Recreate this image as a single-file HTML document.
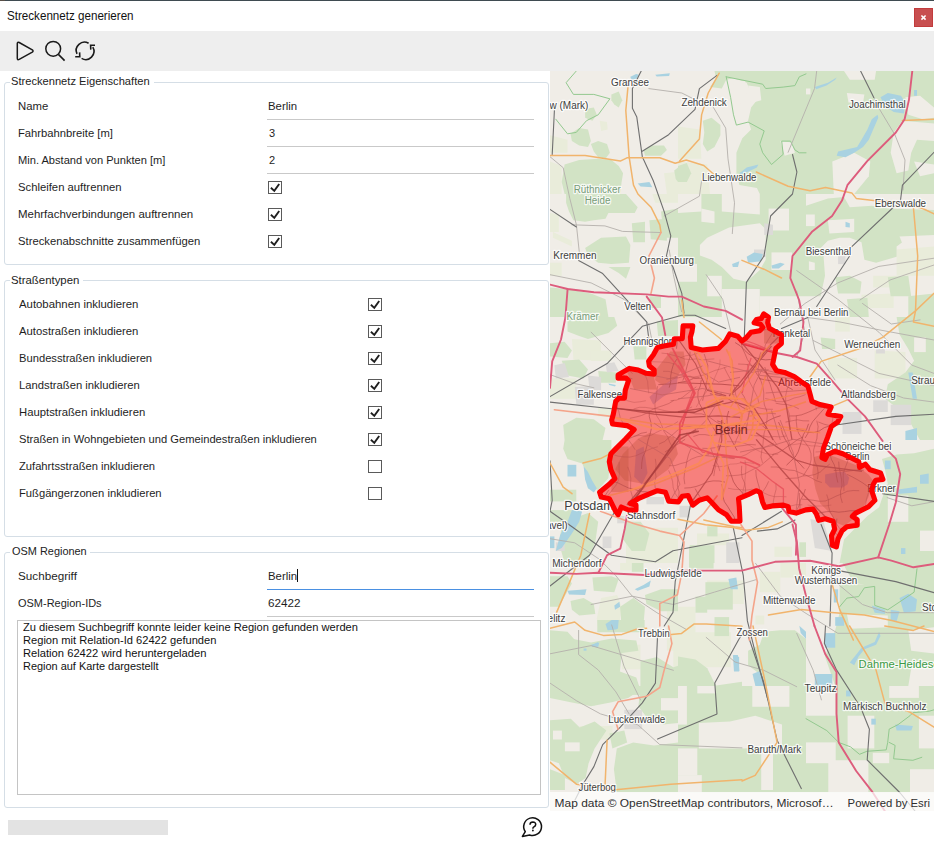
<!DOCTYPE html>
<html><head><meta charset="utf-8"><style>
html,body{margin:0;padding:0;background:#fff;}
body{width:934px;height:842px;position:relative;overflow:hidden;font-family:"Liberation Sans",sans-serif;}
.t{position:absolute;white-space:nowrap;}
.cb{position:absolute;width:12px;height:11px;border:1px solid #5a5a5a;background:#fff;}
.ck{position:absolute;}
.fs{position:absolute;left:4px;width:543px;border:1px solid #d5dee6;border-radius:3px;}
.lg{position:absolute;background:#fff;}
.ul{position:absolute;left:267px;width:267px;height:1px;background:#c9c9c9;}
</style></head>
<body>
<div style="position:absolute;left:0;top:0;width:934px;height:1px;background:#3f4b51"></div>
<div style="position:absolute;left:0;top:0;width:5px;height:1px;background:#5a5048"></div>
<div class="t" style="left:7.2px;top:8.74px;font-size:12.3px;line-height:14px;color:#111;transform:scaleX(0.9446);transform-origin:0 0;">Streckennetz generieren</div>
<div style="position:absolute;left:914px;top:8px;width:17px;height:17px;background:#c84f50;border:1px solid #c23c3d;"></div>
<svg style="position:absolute;left:914px;top:8px" width="19" height="19" viewBox="0 0 19 19"><path d="M7.4 7.5 L11.6 11.6 M11.6 7.5 L7.4 11.6" stroke="#fff" stroke-width="1.6"/></svg>
<div style="position:absolute;left:0;top:31px;width:934px;height:40px;background:#eeeeee"></div>
<svg style="position:absolute;left:0;top:31px" width="110" height="40" viewBox="0 31 110 40">
<path d="M17.3 43.6 Q17.3 41.6 19.2 42.5 L32.3 49.9 Q33.8 51 32.3 52.1 L19.2 59.3 Q17.3 60.3 17.3 58.3 Z" fill="none" stroke="#1a1a1a" stroke-width="1.5" stroke-linejoin="round"/>
<circle cx="53.2" cy="48.8" r="7.4" fill="none" stroke="#1a1a1a" stroke-width="1.5"/>
<path d="M58.4 54.4 L64.6 60.6" stroke="#1a1a1a" stroke-width="1.6"/>
<path d="M88.6 43.3 A8.2 8.2 0 0 0 77 53.8" fill="none" stroke="#1a1a1a" stroke-width="1.6"/>
<path d="M81.6 58.4 A8.2 8.2 0 0 0 92.8 47.2" fill="none" stroke="#1a1a1a" stroke-width="1.6"/>
<path d="M75.2 56.8 L79.8 56.8 L79.6 52.4" fill="none" stroke="#1a1a1a" stroke-width="1.6"/>
<path d="M95 45.3 L90.6 45.3 L90.8 49.6" fill="none" stroke="#1a1a1a" stroke-width="1.6"/>
</svg>
<div class="fs" style="top:82px;height:181px"></div>
<div class="lg" style="left:10px;top:80px;width:144px;height:4px"></div>
<div class="t" style="left:11.399999999999999px;top:74.69px;font-size:11px;line-height:13px;color:#222;transform:scaleX(1.0119);transform-origin:0 0;">Streckennetz Eigenschaften</div>
<div class="t" style="left:18.4px;top:99.69px;font-size:11px;line-height:13px;color:#1e1e1e;transform:scaleX(1.0292);transform-origin:0 0;">Name</div>
<div class="t" style="left:268.4px;top:99.69px;font-size:11px;line-height:13px;color:#1e1e1e;transform:scaleX(1.0347);transform-origin:0 0;">Berlin</div>
<div class="ul" style="top:119px"></div>
<div class="t" style="left:18.4px;top:126.69px;font-size:11px;line-height:13px;color:#1e1e1e;transform:scaleX(1.0211);transform-origin:0 0;">Fahrbahnbreite [m]</div>
<div class="t" style="left:269px;top:126.69px;font-size:11px;line-height:13px;color:#1e1e1e;">3</div>
<div class="ul" style="top:146px"></div>
<div class="t" style="left:18.4px;top:153.69px;font-size:11px;line-height:13px;color:#1e1e1e;transform:scaleX(1.0086);transform-origin:0 0;">Min. Abstand von Punkten [m]</div>
<div class="t" style="left:269px;top:153.69px;font-size:11px;line-height:13px;color:#1e1e1e;">2</div>
<div class="ul" style="top:173px"></div>
<div class="t" style="left:18.4px;top:180.69px;font-size:11px;line-height:13px;color:#1e1e1e;transform:scaleX(1.0257);transform-origin:0 0;">Schleifen auftrennen</div>
<div class="cb" style="left:268px;top:181px"></div><svg class="ck" style="left:268px;top:181px" width="14" height="13" viewBox="0 0 14 13"><path d="M2.9 6.8 L6.3 9.9 L11.2 3" fill="none" stroke="#1f1f1f" stroke-width="1.9"/></svg>
<div class="t" style="left:18.4px;top:207.69px;font-size:11px;line-height:13px;color:#1e1e1e;transform:scaleX(1.0417);transform-origin:0 0;">Mehrfachverbindungen auftrennen</div>
<div class="cb" style="left:268px;top:208px"></div><svg class="ck" style="left:268px;top:208px" width="14" height="13" viewBox="0 0 14 13"><path d="M2.9 6.8 L6.3 9.9 L11.2 3" fill="none" stroke="#1f1f1f" stroke-width="1.9"/></svg>
<div class="t" style="left:18.4px;top:234.69px;font-size:11px;line-height:13px;color:#1e1e1e;transform:scaleX(1.0245);transform-origin:0 0;">Streckenabschnitte zusammenfügen</div>
<div class="cb" style="left:268px;top:235px"></div><svg class="ck" style="left:268px;top:235px" width="14" height="13" viewBox="0 0 14 13"><path d="M2.9 6.8 L6.3 9.9 L11.2 3" fill="none" stroke="#1f1f1f" stroke-width="1.9"/></svg>
<div class="fs" style="top:280px;height:255px"></div>
<div class="lg" style="left:10px;top:278px;width:73px;height:4px"></div>
<div class="t" style="left:11.2px;top:273.69px;font-size:11px;line-height:13px;color:#222;transform:scaleX(1.0342);transform-origin:0 0;">Straßentypen</div>
<div class="t" style="left:18.5px;top:297.69px;font-size:11px;line-height:13px;color:#1e1e1e;transform:scaleX(1.0329);transform-origin:0 0;">Autobahnen inkludieren</div>
<div class="cb" style="left:368px;top:298px"></div><svg class="ck" style="left:368px;top:298px" width="14" height="13" viewBox="0 0 14 13"><path d="M2.9 6.8 L6.3 9.9 L11.2 3" fill="none" stroke="#1f1f1f" stroke-width="1.9"/></svg>
<div class="t" style="left:18.5px;top:324.69px;font-size:11px;line-height:13px;color:#1e1e1e;transform:scaleX(1.0277);transform-origin:0 0;">Autostraßen inkludieren</div>
<div class="cb" style="left:368px;top:325px"></div><svg class="ck" style="left:368px;top:325px" width="14" height="13" viewBox="0 0 14 13"><path d="M2.9 6.8 L6.3 9.9 L11.2 3" fill="none" stroke="#1f1f1f" stroke-width="1.9"/></svg>
<div class="t" style="left:18.5px;top:351.69px;font-size:11px;line-height:13px;color:#1e1e1e;transform:scaleX(1.0171);transform-origin:0 0;">Bundesstraßen inkludieren</div>
<div class="cb" style="left:368px;top:352px"></div><svg class="ck" style="left:368px;top:352px" width="14" height="13" viewBox="0 0 14 13"><path d="M2.9 6.8 L6.3 9.9 L11.2 3" fill="none" stroke="#1f1f1f" stroke-width="1.9"/></svg>
<div class="t" style="left:18.5px;top:378.69px;font-size:11px;line-height:13px;color:#1e1e1e;transform:scaleX(1.0227);transform-origin:0 0;">Landstraßen inkludieren</div>
<div class="cb" style="left:368px;top:379px"></div><svg class="ck" style="left:368px;top:379px" width="14" height="13" viewBox="0 0 14 13"><path d="M2.9 6.8 L6.3 9.9 L11.2 3" fill="none" stroke="#1f1f1f" stroke-width="1.9"/></svg>
<div class="t" style="left:18.5px;top:405.69px;font-size:11px;line-height:13px;color:#1e1e1e;transform:scaleX(1.0268);transform-origin:0 0;">Hauptstraßen inkludieren</div>
<div class="cb" style="left:368px;top:406px"></div><svg class="ck" style="left:368px;top:406px" width="14" height="13" viewBox="0 0 14 13"><path d="M2.9 6.8 L6.3 9.9 L11.2 3" fill="none" stroke="#1f1f1f" stroke-width="1.9"/></svg>
<div class="t" style="left:18.5px;top:432.69px;font-size:11px;line-height:13px;color:#1e1e1e;transform:scaleX(1.0153);transform-origin:0 0;">Straßen in Wohngebieten und Gemeindestraßen inkludieren</div>
<div class="cb" style="left:368px;top:433px"></div><svg class="ck" style="left:368px;top:433px" width="14" height="13" viewBox="0 0 14 13"><path d="M2.9 6.8 L6.3 9.9 L11.2 3" fill="none" stroke="#1f1f1f" stroke-width="1.9"/></svg>
<div class="t" style="left:18.5px;top:459.69px;font-size:11px;line-height:13px;color:#1e1e1e;transform:scaleX(1.0164);transform-origin:0 0;">Zufahrtsstraßen inkludieren</div>
<div class="cb" style="left:368px;top:460px"></div>
<div class="t" style="left:18.5px;top:486.69px;font-size:11px;line-height:13px;color:#1e1e1e;transform:scaleX(1.0183);transform-origin:0 0;">Fußgängerzonen inkludieren</div>
<div class="cb" style="left:368px;top:487px"></div>
<div class="fs" style="top:552px;height:254px"></div>
<div class="lg" style="left:10px;top:550px;width:80px;height:4px"></div>
<div class="t" style="left:11.5px;top:544.69px;font-size:11px;line-height:13px;color:#222;transform:scaleX(0.9932);transform-origin:0 0;">OSM Regionen</div>
<div class="t" style="left:18.4px;top:569.89px;font-size:11px;line-height:13px;color:#1e1e1e;transform:scaleX(1.0623);transform-origin:0 0;">Suchbegriff</div>
<div class="t" style="left:268.4px;top:569.89px;font-size:11px;line-height:13px;color:#1e1e1e;transform:scaleX(1.0347);transform-origin:0 0;">Berlin</div>
<div style="position:absolute;left:297px;top:569px;width:1px;height:13px;background:#111"></div>
<div class="ul" style="top:589px;background:#4a90e2;height:1.3px"></div>
<div class="t" style="left:18.4px;top:596.89px;font-size:11px;line-height:13px;color:#1e1e1e;transform:scaleX(0.9983);transform-origin:0 0;">OSM-Region-IDs</div>
<div class="t" style="left:268.2px;top:596.89px;font-size:11px;line-height:13px;color:#1e1e1e;transform:scaleX(1.0625);transform-origin:0 0;">62422</div>
<div class="ul" style="top:616px"></div>
<div style="position:absolute;left:17px;top:620px;width:522px;height:173px;border:1px solid #c4c4c4;background:#fff"></div>
<div class="t" style="left:22.599999999999998px;top:620.89px;font-size:11px;line-height:13px;color:#111;transform:scaleX(1.0113);transform-origin:0 0;">Zu diesem Suchbegriff konnte leider keine Region gefunden werden</div>
<div class="t" style="left:22.599999999999998px;top:633.89px;font-size:11px;line-height:13px;color:#111;transform:scaleX(1.0104);transform-origin:0 0;">Region mit Relation-Id 62422 gefunden</div>
<div class="t" style="left:22.599999999999998px;top:646.89px;font-size:11px;line-height:13px;color:#111;transform:scaleX(1.0171);transform-origin:0 0;">Relation 62422 wird heruntergeladen</div>
<div class="t" style="left:22.599999999999998px;top:659.89px;font-size:11px;line-height:13px;color:#111;transform:scaleX(0.9937);transform-origin:0 0;">Region auf Karte dargestellt</div>
<div style="position:absolute;left:8px;top:820px;width:160px;height:15px;background:#e3e3e3"></div>
<svg style="position:absolute;left:510px;top:805px" width="40" height="37" viewBox="510 805 40 37">
<path d="M525.3 831.7 A8.9 8.9 0 1 1 529.6 835 L522.4 836.4 Z" fill="none" stroke="#111" stroke-width="1.5" stroke-linejoin="round"/>
<path d="M530 824.7 Q530.1 822.1 532.9 822.1 Q535.8 822.2 535.7 824.6 Q535.6 826.2 533.6 827.2 Q532.9 827.6 532.9 828.7" fill="none" stroke="#111" stroke-width="1.5"/>
<circle cx="532.9" cy="830.5" r="0.9" fill="#111"/>
</svg>

<svg style="position:absolute;left:550px;top:71px" width="384" height="740" viewBox="550 71 384 740">
<rect x="550" y="71" width="384" height="740" fill="#f0ede7"/>
<path d="M599.7 120.7 L607.0 122.1 L607.7 129.4 L601.1 130.9 Z" fill="#e9ecda"/>
<path d="M550.0 135.3 L567.5 139.7 L567.5 152.8 L550.0 152.8 Z" fill="#e9ecda"/>
<path d="M550.0 161.6 L561.7 166.0 L561.7 194.0 L550.0 194.0 Z" fill="#e9ecda"/>
<path d="M664.0 173.3 L678.0 171.8 L678.0 194.0 L666.9 194.0 Z" fill="#e9ecda"/>
<path d="M678.0 126.5 L699.9 129.4 L701.4 158.7 L678.0 158.7 Z" fill="#e9ecda"/>
<path d="M678.0 161.6 L707.2 164.5 L710.1 194.0 L678.0 194.0 Z" fill="#e9ecda"/>
<path d="M887.8 152.8 L905.4 149.9 L906.8 176.2 L890.7 176.2 Z" fill="#e9ecda"/>
<path d="M552.9 232.0 L571.9 240.8 L571.9 246.6 L552.9 237.8 Z" fill="#e9ecda"/>
<path d="M550.0 213.0 L558.8 214.5 L558.8 232.0 L550.0 232.0 Z" fill="#e9ecda"/>
<path d="M550.0 262.7 L561.7 262.7 L561.7 275.8 L550.0 275.8 Z" fill="#e9ecda"/>
<path d="M652.3 194.0 L678.0 194.0 L678.0 202.8 L655.2 202.8 Z" fill="#e9ecda"/>
<path d="M742.3 199.8 L759.8 199.8 L759.8 214.5 L742.3 214.5 Z" fill="#e9ecda"/>
<path d="M896.6 249.5 L934.0 246.6 L934.0 275.8 L896.6 275.8 Z" fill="#e9ecda"/>
<path d="M873.2 275.8 L896.6 275.8 L896.6 287.5 L873.2 287.5 Z" fill="#e9ecda"/>
<path d="M861.5 294.8 L893.7 293.4 L893.7 308.0 L861.5 308.0 Z" fill="#e9ecda"/>
<path d="M571.9 338.9 L601.1 340.4 L601.1 360.8 L573.4 359.4 Z" fill="#e9ecda"/>
<path d="M550.0 378.4 L576.3 378.4 L576.3 398.8 L550.0 398.8 Z" fill="#e9ecda"/>
<path d="M590.9 350.6 L611.4 350.6 L611.4 360.8 L590.9 360.8 Z" fill="#e9ecda"/>
<path d="M598.2 407.6 L611.4 407.6 L611.4 416.4 L598.2 416.4 Z" fill="#e9ecda"/>
<path d="M827.9 357.9 L857.1 357.9 L857.1 378.4 L827.9 378.4 Z" fill="#e9ecda"/>
<path d="M874.7 350.6 L905.4 352.1 L905.4 378.4 L874.7 378.4 Z" fill="#e9ecda"/>
<path d="M835.2 317.0 L849.8 317.0 L849.8 331.6 L835.2 331.6 Z" fill="#e9ecda"/>
<path d="M626.0 527.7 L678.0 527.7 L678.0 563.0 L626.0 563.0 Z" fill="#e9ecda"/>
<path d="M697.0 533.5 L729.1 533.5 L729.1 545.2 L697.0 545.2 Z" fill="#e9ecda"/>
<path d="M774.4 546.7 L792.0 546.7 L792.0 556.9 L774.4 556.9 Z" fill="#e9ecda"/>
<path d="M857.1 535.0 L870.3 535.0 L870.3 545.2 L857.1 545.2 Z" fill="#e9ecda"/>
<path d="M621.9 644.7 L640.4 644.7 L640.4 669.3 L621.9 669.3 Z" fill="#e9ecda"/>
<path d="M673.3 632.3 L730.9 632.3 L730.9 667.3 L673.3 667.3 Z" fill="#e9ecda"/>
<path d="M601.1 598.1 L617.2 595.1 L621.6 606.8 L618.7 630.2 L598.2 628.8 L596.8 618.5 Z" fill="#e9ecda"/>
<path d="M666.9 611.2 L678.0 611.2 L678.0 650.7 L666.9 650.7 Z" fill="#e9ecda"/>
<path d="M620.1 563.0 L631.8 563.0 L631.8 570.3 L620.1 570.3 Z" fill="#e9ecda"/>
<path d="M678.0 606.8 L695.5 606.8 L695.5 633.1 L678.0 633.1 Z" fill="#e9ecda"/>
<path d="M707.2 580.5 L743.8 580.5 L743.8 603.9 L707.2 603.9 Z" fill="#e9ecda"/>
<path d="M678.0 633.1 L718.9 633.1 L718.9 665.3 L678.0 665.3 Z" fill="#e9ecda"/>
<path d="M759.8 571.8 L780.3 571.8 L780.3 592.2 L759.8 592.2 Z" fill="#e9ecda"/>
<path d="M780.3 563.0 L806.0 563.0 L806.0 577.6 L780.3 577.6 Z" fill="#e9ecda"/>
<path d="M755.4 615.6 L764.2 615.6 L764.2 624.4 L755.4 624.4 Z" fill="#e9ecda"/>
<path d="M845.5 615.6 L860.1 615.6 L860.1 627.3 L845.5 627.3 Z" fill="#e9ecda"/>
<path d="M579.7 726.1 L612.4 726.1 L612.4 739.5 L579.7 739.5 Z" fill="#e9ecda"/>
<path d="M636.1 751.3 L678.0 751.3 L678.0 781.0 L636.1 781.0 Z" fill="#e9ecda"/>
<path d="M570.5 133.8 L579.2 128.0 L588.0 129.4 L590.9 141.1 L588.0 147.0 L579.2 145.5 L571.9 141.1 Z" fill="#d2e3c5"/>
<path d="M590.9 144.1 L598.2 141.1 L607.0 144.1 L609.9 152.8 L605.5 158.7 L598.2 157.2 L593.8 151.4 Z" fill="#d2e3c5"/>
<path d="M585.1 109.0 L593.8 107.5 L596.8 114.8 L592.4 120.7 L585.1 117.8 Z" fill="#d2e3c5"/>
<path d="M611.4 94.4 L618.7 91.5 L622.3 100.2 L618.7 107.5 L614.3 104.6 L611.4 100.2 Z" fill="#d2e3c5"/>
<path d="M564.6 164.5 L579.2 160.1 L598.2 158.7 L611.4 160.1 L618.7 166.0 L623.1 173.3 L621.6 182.0 L620.1 194.0 L564.6 194.0 L561.7 182.0 Z" fill="#d2e3c5"/>
<path d="M643.5 149.9 L652.3 145.5 L664.0 145.5 L666.9 149.9 L661.0 155.7 L645.0 155.7 Z" fill="#d2e3c5"/>
<path d="M674.2 170.4 L678.0 167.4 L678.0 182.0 L675.7 179.1 Z" fill="#d2e3c5"/>
<path d="M714.5 71.0 L806.0 71.0 L806.0 194.0 L759.8 194.0 L756.9 187.9 L739.4 185.0 L736.4 173.3 L736.4 152.8 L742.3 138.2 L751.1 129.4 L748.1 120.7 L751.1 107.5 L756.9 100.2 L751.1 92.9 L746.7 82.7 L733.5 78.3 L726.2 79.8 L721.8 88.5 L710.1 87.1 L716.0 78.3 Z" fill="#d2e3c5"/>
<path d="M702.8 120.7 L711.6 117.8 L720.4 125.1 L720.4 135.3 L714.5 147.0 L707.2 151.4 L702.8 144.1 L704.3 132.4 Z" fill="#d2e3c5"/>
<path d="M678.0 166.0 L686.8 163.1 L691.2 173.3 L686.8 182.0 L678.0 182.0 Z" fill="#d2e3c5"/>
<path d="M806.0 71.0 L934.0 71.0 L934.0 194.0 L806.0 194.0 Z" fill="#d2e3c5"/>
<path d="M566.1 194.0 L626.0 194.0 L637.7 207.2 L634.7 213.0 L608.4 213.0 L605.5 218.8 L593.8 220.3 L585.1 221.8 L573.4 220.3 L569.0 211.5 L566.1 202.8 Z" fill="#d2e3c5"/>
<path d="M585.1 248.1 L601.1 237.8 L626.0 236.4 L630.4 245.1 L628.9 262.7 L611.4 264.1 L598.2 262.7 L588.0 255.4 Z" fill="#d2e3c5"/>
<path d="M608.4 267.1 L630.4 267.1 L626.0 278.7 L618.7 272.9 Z" fill="#d2e3c5"/>
<path d="M631.8 223.2 L645.0 221.8 L645.0 242.2 L633.3 242.2 Z" fill="#d2e3c5"/>
<path d="M649.4 220.3 L666.9 218.8 L666.9 240.8 L650.8 239.3 Z" fill="#d2e3c5"/>
<path d="M661.0 211.5 L678.0 208.6 L678.0 237.8 L664.0 237.8 Z" fill="#d2e3c5"/>
<path d="M550.0 287.5 L567.5 289.0 L590.9 293.4 L605.5 299.2 L608.4 317.0 L550.0 317.0 Z" fill="#d2e3c5"/>
<path d="M649.4 296.3 L661.0 296.3 L661.0 308.0 L649.4 308.0 Z" fill="#d2e3c5"/>
<path d="M678.0 194.0 L806.0 194.0 L806.0 317.0 L678.0 317.0 Z" fill="#d2e3c5"/>
<path d="M806.0 205.7 L827.9 198.4 L844.0 196.9 L849.8 207.2 L871.8 205.7 L887.8 208.6 L934.0 210.1 L934.0 240.8 L908.3 237.8 L896.6 246.6 L896.6 256.8 L876.1 262.7 L864.4 259.8 L861.5 242.2 L849.8 237.8 L839.6 237.8 L827.9 240.8 L820.6 248.1 L806.0 248.1 Z" fill="#d2e3c5"/>
<path d="M806.0 252.4 L823.5 255.4 L825.0 275.8 L820.6 296.3 L806.0 296.3 Z" fill="#d2e3c5"/>
<path d="M835.2 277.3 L849.8 275.8 L861.5 281.7 L860.1 293.4 L838.1 293.4 Z" fill="#d2e3c5"/>
<path d="M887.8 277.3 L908.3 275.8 L911.2 296.3 L890.7 296.3 Z" fill="#d2e3c5"/>
<path d="M846.9 299.2 L867.4 297.7 L868.8 317.0 L849.8 317.0 Z" fill="#d2e3c5"/>
<path d="M908.3 296.3 L934.0 293.4 L934.0 317.0 L908.3 317.0 Z" fill="#d2e3c5"/>
<path d="M567.5 317.0 L614.3 317.0 L617.2 325.8 L608.4 333.1 L598.2 336.0 L588.0 338.9 L579.2 336.0 L567.5 331.6 Z" fill="#d2e3c5"/>
<path d="M550.0 343.3 L564.6 341.8 L571.9 350.6 L567.5 357.9 L550.0 356.5 Z" fill="#d2e3c5"/>
<path d="M561.7 360.8 L579.2 359.4 L588.0 369.6 L583.6 378.4 L567.5 375.4 Z" fill="#d2e3c5"/>
<path d="M633.3 346.2 L646.4 346.2 L646.4 359.4 L634.7 359.4 Z" fill="#d2e3c5"/>
<path d="M598.2 371.1 L617.2 372.5 L615.8 382.8 L599.7 382.8 Z" fill="#d2e3c5"/>
<path d="M656.7 321.4 L678.0 319.9 L678.0 336.0 L658.1 336.0 Z" fill="#d2e3c5"/>
<path d="M563.2 425.1 L576.3 417.8 L593.8 419.3 L605.5 428.0 L602.6 440.0 L564.6 440.0 Z" fill="#d2e3c5"/>
<path d="M896.6 317.0 L934.0 317.0 L934.0 440.0 L920.0 440.0 L908.3 419.3 L896.6 407.6 L884.9 398.8 L887.8 384.2 L905.4 372.5 L914.1 360.8 L908.3 349.1 L899.5 334.5 Z" fill="#d2e3c5"/>
<path d="M820.6 337.5 L835.2 338.9 L835.2 349.1 L822.1 349.1 Z" fill="#d2e3c5"/>
<path d="M564.6 440.0 L611.4 440.0 L611.4 451.7 L608.4 478.0 L598.2 489.7 L588.0 488.2 L585.1 469.2 L582.1 463.4 L567.5 459.0 L563.2 448.8 Z" fill="#d2e3c5"/>
<path d="M550.0 489.7 L576.3 489.7 L576.3 501.4 L550.0 501.4 Z" fill="#d2e3c5"/>
<path d="M550.0 510.1 L571.9 510.1 L571.9 521.8 L550.0 521.8 Z" fill="#d2e3c5"/>
<path d="M571.9 518.9 L588.0 513.1 L598.2 521.8 L595.3 542.3 L586.5 563.0 L564.6 563.0 L558.8 542.3 L561.7 527.7 Z" fill="#d2e3c5"/>
<path d="M626.0 521.8 L640.6 521.8 L649.4 533.5 L645.0 551.0 L631.8 551.0 L623.1 539.4 Z" fill="#d2e3c5"/>
<path d="M689.7 545.2 L714.5 545.2 L714.5 563.0 L689.7 563.0 Z" fill="#d2e3c5"/>
<path d="M707.2 526.2 L717.5 526.2 L717.5 536.4 L707.2 536.4 Z" fill="#d2e3c5"/>
<path d="M799.3 542.3 L806.0 542.3 L806.0 556.9 L799.3 556.9 Z" fill="#d2e3c5"/>
<path d="M882.0 459.0 L896.6 454.6 L914.1 453.2 L934.0 448.8 L934.0 563.0 L839.6 563.0 L844.0 539.4 L855.7 527.7 L867.4 516.0 L879.1 507.2 L882.0 498.4 L887.8 483.8 L884.9 469.2 Z" fill="#d2e3c5"/>
<path d="M550.0 576.2 L567.5 576.2 L571.9 583.5 L564.6 596.6 L558.8 606.8 L550.0 606.8 Z" fill="#d2e3c5"/>
<path d="M570.5 601.0 L583.6 598.1 L593.8 603.9 L595.3 614.1 L579.2 615.6 L571.9 609.8 Z" fill="#d2e3c5"/>
<path d="M592.4 577.6 L611.4 576.2 L618.7 579.1 L614.3 592.2 L593.8 590.8 Z" fill="#d2e3c5"/>
<path d="M620.1 606.8 L633.3 598.1 L645.0 606.8 L643.5 624.4 L631.8 631.7 L621.6 627.3 Z" fill="#d2e3c5"/>
<path d="M631.8 563.0 L643.5 563.0 L643.5 571.8 L631.8 571.8 Z" fill="#d2e3c5"/>
<path d="M645.0 595.1 L661.0 589.3 L678.0 589.3 L678.0 611.2 L661.0 611.2 L646.4 603.9 Z" fill="#d2e3c5"/>
<path d="M550.0 630.2 L567.5 631.7 L579.2 644.8 L579.2 658.0 L593.8 650.7 L608.4 647.7 L614.3 641.9 L618.7 642.6 L614.3 653.6 L611.4 658.0 L579.2 662.4 L550.0 662.4 Z" fill="#d2e3c5"/>
<path d="M550.0 642.6 L570.6 638.5 L591.1 642.6 L611.7 638.5 L636.3 640.6 L638.4 650.8 L621.9 652.9 L619.9 671.4 L636.3 677.6 L640.4 689.9 L628.1 698.1 L611.7 702.2 L591.1 706.3 L570.6 702.2 L550.0 698.1 Z" fill="#d2e3c5"/>
<path d="M640.4 661.1 L656.9 657.0 L673.3 667.3 L693.9 661.1 L706.2 673.4 L714.4 685.8 L742.0 681.7 L742.0 719.9 L648.7 719.9 L638.4 706.3 L640.4 687.8 Z" fill="#d2e3c5"/>
<path d="M597.3 620.0 L644.6 620.0 L644.6 632.3 L597.3 632.3 Z" fill="#d2e3c5"/>
<path d="M764.2 631.7 L780.3 630.2 L794.9 630.2 L806.0 639.0 L806.0 686.0 L765.7 686.0 L759.8 674.0 L748.1 665.3 L748.1 650.7 L759.8 644.8 Z" fill="#d2e3c5"/>
<path d="M678.0 656.5 L695.5 659.4 L707.2 668.2 L716.0 686.0 L678.0 686.0 Z" fill="#d2e3c5"/>
<path d="M695.5 596.6 L707.2 596.6 L707.2 612.7 L695.5 612.7 Z" fill="#d2e3c5"/>
<path d="M711.6 592.2 L727.7 592.2 L727.7 603.9 L711.6 603.9 Z" fill="#d2e3c5"/>
<path d="M714.5 617.1 L729.1 617.1 L729.1 636.1 L714.5 636.1 Z" fill="#d2e3c5"/>
<path d="M839.6 583.5 L874.7 584.9 L887.8 580.5 L901.0 571.8 L934.0 568.8 L934.0 627.3 L908.3 630.2 L911.2 650.7 L934.0 653.6 L934.0 665.3 L911.2 668.2 L908.3 686.0 L835.2 686.0 L825.0 656.5 L835.2 630.2 L839.6 612.7 Z" fill="#d2e3c5"/>
<path d="M558.9 686.0 L612.4 686.0 L612.4 694.9 L603.5 702.3 L594.6 705.3 L573.8 700.9 L561.9 694.9 Z" fill="#d2e3c5"/>
<path d="M630.2 686.0 L654.0 686.0 L654.0 694.9 L630.2 694.9 Z" fill="#d2e3c5"/>
<path d="M651.0 697.9 L678.0 694.9 L678.0 723.1 L662.9 724.6 L654.0 715.7 Z" fill="#d2e3c5"/>
<path d="M550.0 720.2 L570.8 718.7 L579.7 727.6 L594.6 721.6 L606.4 730.6 L594.6 748.4 L588.6 763.2 L585.6 778.1 L576.7 784.0 L564.9 778.1 L558.9 763.2 L550.0 760.3 Z" fill="#d2e3c5"/>
<path d="M616.8 748.4 L633.2 742.4 L654.0 745.4 L678.0 742.4 L678.0 792.2 L616.8 792.2 L613.9 769.2 Z" fill="#d2e3c5"/>
<path d="M609.4 733.5 L624.3 730.6 L627.2 742.4 L612.4 748.4 Z" fill="#d2e3c5"/>
<path d="M550.0 769.2 L564.9 775.1 L564.9 790.0 L550.0 790.0 Z" fill="#d2e3c5"/>
<path d="M678.0 686.0 L806.0 686.0 L806.0 792.2 L678.0 792.2 Z" fill="#d2e3c5"/>
<path d="M806.0 686.0 L934.0 686.0 L934.0 792.2 L806.0 792.2 Z" fill="#d2e3c5"/>
<path d="M842.5 563.0 L934.0 554.8 L934.0 590.5 L886.3 590.5 L853.4 582.2 Z" fill="#d2e3c5"/>
<path d="M689.0 546.6 L713.6 546.6 L713.6 568.5 L689.0 568.5 Z" fill="#d2e3c5"/>
<path d="M705.4 582.2 L732.8 582.2 L732.8 609.6 L705.4 609.6 Z" fill="#d2e3c5"/>
<path d="M733.5 79.8 L745.2 81.2 L746.7 100.2 L739.4 104.6 L735.0 100.2 Z" fill="#f0ede7"/>
<path d="M748.1 85.6 L759.8 87.1 L761.3 100.2 L751.1 103.1 Z" fill="#f0ede7"/>
<path d="M780.3 141.1 L792.0 142.6 L794.9 152.8 L784.7 155.7 Z" fill="#f0ede7"/>
<path d="M844.0 71.0 L876.1 71.0 L874.7 79.8 L849.8 79.8 Z" fill="#f0ede7"/>
<path d="M905.4 97.3 L920.0 95.8 L934.0 107.5 L934.0 117.8 L922.9 119.2 L908.3 114.8 Z" fill="#f0ede7"/>
<path d="M893.7 132.4 L902.4 120.7 L934.0 123.6 L934.0 141.1 L917.0 139.7 L911.2 152.8 L908.3 170.4 L896.6 173.3 L890.7 152.8 Z" fill="#f0ede7"/>
<path d="M914.1 161.6 L934.0 164.5 L934.0 173.3 L920.0 176.2 Z" fill="#f0ede7"/>
<path d="M832.3 161.6 L854.2 152.8 L870.3 161.6 L868.8 176.2 L854.2 194.0 L833.8 194.0 Z" fill="#f0ede7"/>
<path d="M806.0 88.5 L810.4 88.5 L810.4 94.4 L806.0 94.4 Z" fill="#f0ede7"/>
<path d="M846.9 92.9 L864.4 94.4 L863.0 103.1 L848.4 102.4 Z" fill="#f0ede7"/>
<path d="M678.0 194.0 L701.4 194.0 L701.4 211.5 L678.0 213.0 Z" fill="#f0ede7"/>
<path d="M701.4 208.6 L714.5 211.5 L714.5 223.2 L701.4 221.8 Z" fill="#f0ede7"/>
<path d="M721.8 194.0 L759.8 194.0 L759.8 214.5 L721.8 211.5 Z" fill="#f0ede7"/>
<path d="M699.9 245.1 L707.2 237.8 L729.1 227.6 L759.8 223.2 L765.7 229.1 L765.7 259.8 L759.8 270.0 L746.7 281.7 L733.5 278.7 L721.8 267.1 L711.6 259.8 L699.9 255.4 Z" fill="#f0ede7"/>
<path d="M678.0 262.7 L697.0 264.1 L697.0 281.7 L678.0 281.7 Z" fill="#f0ede7"/>
<path d="M707.2 275.8 L721.8 275.8 L721.8 296.3 L707.2 296.3 Z" fill="#f0ede7"/>
<path d="M721.8 289.0 L759.8 289.0 L759.8 317.0 L721.8 317.0 Z" fill="#f0ede7"/>
<path d="M768.6 208.6 L789.0 208.6 L789.0 230.5 L768.6 230.5 Z" fill="#f0ede7"/>
<path d="M771.5 252.4 L792.0 252.4 L792.0 270.0 L771.5 270.0 Z" fill="#f0ede7"/>
<path d="M759.8 296.3 L806.0 296.3 L806.0 317.0 L759.8 317.0 Z" fill="#f0ede7"/>
<path d="M827.9 220.3 L854.2 218.8 L854.2 232.0 L829.4 233.5 Z" fill="#f0ede7"/>
<path d="M806.0 214.5 L814.8 214.5 L814.8 226.1 L806.0 226.1 Z" fill="#f0ede7"/>
<path d="M899.5 236.4 L934.0 234.9 L934.0 242.2 L902.4 243.7 Z" fill="#f0ede7"/>
<path d="M808.9 261.2 L814.8 262.7 L814.8 270.0 L808.9 270.0 Z" fill="#f0ede7"/>
<path d="M914.1 337.5 L925.8 337.5 L925.8 352.1 L914.1 352.1 Z" fill="#f0ede7"/>
<path d="M887.8 495.5 L908.3 495.5 L908.3 521.8 L887.8 521.8 Z" fill="#f0ede7"/>
<path d="M920.0 530.6 L934.0 530.6 L934.0 551.0 L920.0 551.0 Z" fill="#f0ede7"/>
<path d="M661.0 698.1 L681.6 698.1 L681.6 710.4 L661.0 710.4 Z" fill="#f0ede7"/>
<path d="M846.9 614.1 L887.8 615.6 L887.8 627.3 L849.8 628.8 Z" fill="#f0ede7"/>
<path d="M553.0 730.6 L561.9 730.6 L561.9 739.5 L553.0 739.5 Z" fill="#f0ede7"/>
<path d="M564.9 742.4 L579.7 742.4 L579.7 751.3 L564.9 751.3 Z" fill="#f0ede7"/>
<path d="M678.0 686.0 L686.9 686.0 L686.9 724.6 L678.0 724.6 Z" fill="#f0ede7"/>
<path d="M697.3 686.0 L715.1 686.0 L715.1 693.4 L697.3 693.4 Z" fill="#f0ede7"/>
<path d="M752.3 686.0 L789.4 686.0 L789.4 706.8 L752.3 706.8 Z" fill="#f0ede7"/>
<path d="M698.8 723.1 L730.0 721.6 L755.2 715.7 L782.0 724.6 L782.0 745.4 L744.8 748.4 L698.8 748.4 Z" fill="#f0ede7"/>
<path d="M678.0 748.4 L697.3 748.4 L697.3 775.1 L678.0 775.1 Z" fill="#f0ede7"/>
<path d="M761.2 748.4 L773.0 748.4 L773.0 790.0 L761.2 790.0 Z" fill="#f0ede7"/>
<path d="M678.0 775.1 L701.8 775.1 L701.8 792.2 L678.0 792.2 Z" fill="#f0ede7"/>
<path d="M806.0 691.9 L835.7 691.9 L835.7 715.7 L806.0 715.7 Z" fill="#f0ede7"/>
<path d="M847.6 715.7 L874.3 715.7 L874.3 748.4 L847.6 748.4 Z" fill="#f0ede7"/>
<path d="M806.0 742.4 L835.7 742.4 L835.7 763.2 L806.0 763.2 Z" fill="#f0ede7"/>
<path d="M828.3 760.3 L868.4 760.3 L868.4 792.2 L828.3 792.2 Z" fill="#f0ede7"/>
<path d="M918.9 715.7 L934.0 715.7 L934.0 748.4 L918.9 748.4 Z" fill="#f0ede7"/>
<path d="M910.0 769.2 L934.0 769.2 L934.0 792.2 L910.0 792.2 Z" fill="#f0ede7"/>
<path d="M889.2 686.0 L918.9 686.0 L918.9 697.9 L889.2 697.9 Z" fill="#f0ede7"/>
<path d="M872.8 752.8 L889.2 752.8 L889.2 763.2 L872.8 763.2 Z" fill="#f0ede7"/>
<path d="M754.0 249.5 L765.7 249.5 L765.7 256.8 L754.0 256.8 Z" fill="#dcdad8"/>
<path d="M764.2 223.2 L773.0 224.7 L773.0 234.9 L764.2 234.9 Z" fill="#dcdad8"/>
<path d="M838.1 255.4 L845.5 255.4 L845.5 264.1 L838.1 264.1 Z" fill="#dcdad8"/>
<path d="M554.4 365.2 L564.6 363.0 L569.0 376.9 L555.8 378.4 Z" fill="#dcdad8"/>
<path d="M605.5 363.8 L614.3 362.3 L618.7 371.1 L607.0 372.5 Z" fill="#dcdad8"/>
<path d="M588.0 375.4 L601.1 376.9 L601.1 390.1 L589.5 390.1 Z" fill="#dcdad8"/>
<path d="M574.8 387.1 L593.8 385.7 L593.8 404.7 L576.3 404.7 Z" fill="#dcdad8"/>
<path d="M890.7 404.7 L911.2 404.7 L911.2 425.1 L890.7 425.1 Z" fill="#dcdad8"/>
<path d="M842.5 412.0 L861.5 412.0 L861.5 433.9 L842.5 433.9 Z" fill="#dcdad8"/>
<path d="M873.2 400.3 L887.8 400.3 L887.8 412.0 L873.2 412.0 Z" fill="#dcdad8"/>
<path d="M876.1 349.1 L884.9 349.1 L884.9 353.5 L876.1 353.5 Z" fill="#dcdad8"/>
<path d="M646.4 497.0 L664.0 497.0 L664.0 504.3 L646.4 504.3 Z" fill="#dcdad8"/>
<path d="M617.2 516.0 L624.5 516.0 L624.5 523.3 L617.2 523.3 Z" fill="#dcdad8"/>
<path d="M602.6 536.4 L611.4 536.4 L611.4 548.1 L602.6 548.1 Z" fill="#dcdad8"/>
<path d="M555.8 542.3 L564.6 542.3 L564.6 551.0 L555.8 551.0 Z" fill="#dcdad8"/>
<path d="M679.5 505.8 L689.7 505.8 L689.7 517.4 L679.5 517.4 Z" fill="#dcdad8"/>
<path d="M726.2 542.3 L739.4 542.3 L739.4 563.0 L726.2 563.0 Z" fill="#dcdad8"/>
<path d="M810.4 518.9 L823.5 521.8 L832.3 551.0 L814.8 548.1 Z" fill="#dcdad8"/>
<path d="M624.3 709.8 L642.1 709.8 L642.1 729.1 L624.3 729.1 Z" fill="#dcdad8"/>
<path d="M630.4 76.8 L636.2 73.9 L639.1 74.7 L636.2 79.0 L631.1 79.8 Z" fill="#a9d2e1"/>
<path d="M655.2 74.7 L669.8 73.2 L669.1 76.1 L656.7 76.6 Z" fill="#a9d2e1"/>
<path d="M637.7 183.5 L649.4 182.0 L652.3 187.2 L640.6 186.4 Z" fill="#a9d2e1"/>
<path d="M739.4 173.3 L746.7 167.4 L758.4 164.5 L756.9 167.4 L748.1 171.8 L740.8 174.7 Z" fill="#a9d2e1"/>
<path d="M880.5 97.3 L887.8 92.9 L901.0 95.8 L905.4 103.1 L903.9 113.4 L893.7 111.9 L884.9 106.1 Z" fill="#a9d2e1"/>
<path d="M877.6 114.8 L871.8 119.2 L867.4 129.4 L861.5 139.7 L857.1 147.0 L838.1 151.4 L836.7 155.7 L845.5 157.2 L854.2 152.8 L863.0 147.0 L868.8 139.7 L873.2 129.4 L878.3 117.8 Z" fill="#a9d2e1"/>
<path d="M814.8 87.1 L827.9 82.7 L836.7 77.6 L835.2 79.8 L826.5 85.6 L816.2 89.3 Z" fill="#a9d2e1"/>
<path d="M914.1 90.0 L917.0 90.0 L917.0 95.8 L914.1 95.8 Z" fill="#a9d2e1"/>
<path d="M746.7 256.8 L754.0 252.4 L762.7 253.9 L761.3 261.2 L748.1 262.7 Z" fill="#a9d2e1"/>
<path d="M771.5 265.6 L780.3 262.7 L784.7 264.1 L778.8 268.5 L772.2 268.5 Z" fill="#a9d2e1"/>
<path d="M732.1 264.1 L739.4 261.2 L737.9 267.1 L732.8 267.1 Z" fill="#a9d2e1"/>
<path d="M845.5 221.8 L849.8 223.2 L849.8 227.6 L845.5 226.9 Z" fill="#a9d2e1"/>
<path d="M608.4 383.5 L615.8 384.9 L615.0 386.4 L609.2 384.9 Z" fill="#a9d2e1"/>
<path d="M908.3 372.5 L912.7 372.5 L917.0 398.8 L912.7 398.8 Z" fill="#a9d2e1"/>
<path d="M905.4 431.0 L917.0 428.0 L917.0 440.0 L905.4 440.0 Z" fill="#a9d2e1"/>
<path d="M567.5 464.8 L576.3 464.8 L576.3 476.5 L567.5 476.5 Z" fill="#a9d2e1"/>
<path d="M583.6 466.3 L588.0 472.1 L592.4 480.9 L596.8 488.2 L593.8 492.6 L588.0 488.2 L585.1 479.5 Z" fill="#a9d2e1"/>
<path d="M571.9 510.1 L582.1 511.6 L579.2 521.8 L571.9 533.5 L561.7 548.1 L555.8 551.0 L560.2 535.0 L567.5 521.8 Z" fill="#a9d2e1"/>
<path d="M550.0 536.4 L554.4 536.4 L554.4 548.1 L550.0 548.1 Z" fill="#a9d2e1"/>
<path d="M884.9 460.5 L890.7 460.5 L890.7 469.2 L884.9 469.2 Z" fill="#a9d2e1"/>
<path d="M896.6 489.7 L917.0 486.8 L917.0 492.6 L896.6 494.1 Z" fill="#a9d2e1"/>
<path d="M920.0 475.1 L928.7 473.6 L928.7 483.8 L920.0 483.8 Z" fill="#a9d2e1"/>
<path d="M901.0 548.1 L905.4 548.1 L905.4 554.0 L901.0 554.0 Z" fill="#a9d2e1"/>
<path d="M605.5 624.1 L611.7 620.0 L617.8 620.0 L616.8 629.2 L607.6 630.3 Z" fill="#a9d2e1"/>
<path d="M591.1 644.7 L599.3 642.6 L598.3 646.7 L592.1 647.1 Z" fill="#a9d2e1"/>
<path d="M732.9 654.9 L739.1 657.0 L739.1 671.4 L734.0 671.4 Z" fill="#a9d2e1"/>
<path d="M567.5 590.8 L586.5 589.3 L585.1 595.1 L569.0 594.4 Z" fill="#a9d2e1"/>
<path d="M614.3 605.4 L619.4 601.7 L620.1 606.8 L615.0 609.8 Z" fill="#a9d2e1"/>
<path d="M607.0 625.8 L612.8 620.0 L618.7 620.0 L617.9 628.8 L608.4 630.2 Z" fill="#a9d2e1"/>
<path d="M634.7 589.3 L643.5 584.9 L650.8 580.5 L649.4 586.4 L637.7 590.8 Z" fill="#a9d2e1"/>
<path d="M592.4 644.8 L598.2 641.9 L596.8 647.7 Z" fill="#a9d2e1"/>
<path d="M583.6 648.5 L586.5 648.5 L586.5 650.7 L583.6 650.7 Z" fill="#a9d2e1"/>
<path d="M728.4 579.1 L736.4 577.6 L737.9 589.3 L730.6 589.3 Z" fill="#a9d2e1"/>
<path d="M733.5 655.1 L737.9 655.1 L739.4 671.1 L734.3 671.1 Z" fill="#a9d2e1"/>
<path d="M752.5 674.0 L759.8 671.1 L767.1 686.0 L755.4 686.0 Z" fill="#a9d2e1"/>
<path d="M799.3 625.8 L806.0 631.7 L806.0 639.0 L800.7 633.1 Z" fill="#a9d2e1"/>
<path d="M899.5 598.1 L908.3 593.7 L917.0 599.5 L915.6 611.2 L903.9 612.7 Z" fill="#a9d2e1"/>
<path d="M871.8 605.4 L884.9 609.8 L884.9 614.1 L874.7 612.7 Z" fill="#a9d2e1"/>
<path d="M890.7 609.8 L899.5 611.2 L896.6 621.4 L890.7 620.0 Z" fill="#a9d2e1"/>
<path d="M833.8 589.3 L838.1 589.3 L838.1 602.5 L833.8 602.5 Z" fill="#a9d2e1"/>
<path d="M835.2 617.1 L844.0 617.1 L844.0 625.8 L835.2 625.8 Z" fill="#a9d2e1"/>
<path d="M879.1 631.7 L874.7 641.9 L861.5 647.7 L857.1 653.6 L849.8 662.4 L854.2 665.3 L858.6 656.5 L864.4 649.2 L876.1 644.8 L880.5 636.1 Z" fill="#a9d2e1"/>
<path d="M825.0 633.1 L835.2 633.1 L835.2 647.7 L825.0 647.7 Z" fill="#a9d2e1"/>
<path d="M814.8 674.0 L832.3 674.0 L832.3 686.0 L814.8 686.0 Z" fill="#a9d2e1"/>
<path d="M895.1 724.6 L912.9 726.1 L911.4 730.6 L896.6 730.6 Z" fill="#a9d2e1"/>
<path d="M871.3 718.7 L875.8 718.7 L875.8 724.6 L871.3 724.6 Z" fill="#a9d2e1"/>
<path d="M846.1 690.5 L850.6 690.5 L850.6 696.4 L846.1 696.4 Z" fill="#a9d2e1"/>
<polyline points="726.2,76.8 730.6,97.3 733.5,114.8 736.4,125.1 748.1,122.1 764.2,130.9 759.8,144.1 762.7,152.8 771.5,164.5 783.2,154.3 781.7,141.1 790.5,141.1 794.9,149.9 799.3,152.8 806.0,152.8" fill="none" stroke="#93c98f" stroke-width="1.0" stroke-linejoin="round" stroke-linecap="round"/>
<polyline points="726.2,76.8 762.7,84.2 765.7,88.5 783.2,87.1 794.9,85.6 799.3,76.8 806.0,73.9" fill="none" stroke="#93c98f" stroke-width="1.0" stroke-linejoin="round" stroke-linecap="round"/>
<polyline points="806.0,718.7 826.8,730.6 838.7,742.4 850.6,746.9 859.5,754.3 866.9,751.3 886.2,749.9 887.7,742.4 889.2,729.1 898.1,724.6 910.0,715.7 912.9,712.7 929.3,711.2 934.0,709.8" fill="none" stroke="#93c98f" stroke-width="1.0" stroke-linejoin="round" stroke-linecap="round"/>
<polyline points="889.2,742.4 895.1,745.4 893.6,758.8 912.9,760.3 921.8,757.3" fill="none" stroke="#93c98f" stroke-width="1.0" stroke-linejoin="round" stroke-linecap="round"/>
<polyline points="839.6,606.8 846.9,598.1 858.6,596.6 864.4,587.8 874.7,586.4 874.7,605.4 887.8,609.8 901.0,601.0 914.1,592.2 917.0,568.8" fill="none" stroke="#93c98f" stroke-width="1.0" stroke-linejoin="round" stroke-linecap="round"/>
<polyline points="576.3,71.0 566.1,82.7 573.4,94.4 593.8,94.4 609.9,98.8 598.2,114.8 586.5,120.7 576.3,132.4 567.5,133.8 555.8,119.2" fill="none" stroke="#93c98f" stroke-width="1.0" stroke-linejoin="round" stroke-linecap="round"/>
<polyline points="550.0,156.7 563.2,167.7 569.8,198.4 576.4,224.8 579.7,256.0" fill="none" stroke="#b4b0ab" stroke-width="0.9" stroke-linejoin="round" stroke-linecap="round"/>
<polyline points="572.0,224.8 604.9,225.9 622.5,231.4 659.8,232.5" fill="none" stroke="#b4b0ab" stroke-width="0.9" stroke-linejoin="round" stroke-linecap="round"/>
<polyline points="712.6,106.1 725.7,128.1 728.0,158.9 734.5,202.8 732.3,233.6" fill="none" stroke="#b4b0ab" stroke-width="0.9" stroke-linejoin="round" stroke-linecap="round"/>
<polyline points="701.6,180.8 699.4,196.2 664.2,216.0" fill="none" stroke="#b4b0ab" stroke-width="0.9" stroke-linejoin="round" stroke-linecap="round"/>
<polyline points="648.9,88.6 681.8,93.0 695.0,99.6" fill="none" stroke="#b4b0ab" stroke-width="0.9" stroke-linejoin="round" stroke-linecap="round"/>
<polyline points="816.7,71.0 814.5,88.6 788.1,152.3" fill="none" stroke="#b4b0ab" stroke-width="0.9" stroke-linejoin="round" stroke-linecap="round"/>
<polyline points="873.8,97.4 880.0,110.0 895.0,135.0 905.0,160.0 903.0,190.0" fill="none" stroke="#b4b0ab" stroke-width="0.9" stroke-linejoin="round" stroke-linecap="round"/>
<polyline points="550.0,374.6 574.2,383.4 593.9,387.8" fill="none" stroke="#b4b0ab" stroke-width="0.9" stroke-linejoin="round" stroke-linecap="round"/>
<polyline points="807.9,317.5 840.0,322.0 880.0,330.0 934.0,340.0" fill="none" stroke="#b4b0ab" stroke-width="0.9" stroke-linejoin="round" stroke-linecap="round"/>
<polyline points="808.0,318.0 815.0,350.0 835.0,380.0" fill="none" stroke="#b4b0ab" stroke-width="0.9" stroke-linejoin="round" stroke-linecap="round"/>
<polyline points="860.0,300.0 890.0,280.0 934.0,265.0" fill="none" stroke="#b4b0ab" stroke-width="0.9" stroke-linejoin="round" stroke-linecap="round"/>
<polyline points="550.0,683.1 576.4,700.7 600.5,713.9 637.9,724.9 659.8,744.6 742.0,747.9" fill="none" stroke="#b4b0ab" stroke-width="0.9" stroke-linejoin="round" stroke-linecap="round"/>
<polyline points="578.6,630.4 578.6,654.6 598.3,670.0 615.9,691.9 629.1,713.9" fill="none" stroke="#b4b0ab" stroke-width="0.9" stroke-linejoin="round" stroke-linecap="round"/>
<polyline points="550.0,538.7 574.7,542.8 599.3,559.2 615.8,575.7 632.2,596.2 656.9,612.7 685.7,629.1" fill="none" stroke="#b4b0ab" stroke-width="0.9" stroke-linejoin="round" stroke-linecap="round"/>
<polyline points="755.6,563.4 780.3,596.2 804.9,612.7 837.8,633.3 878.9,633.3 934.0,633.3" fill="none" stroke="#b4b0ab" stroke-width="0.9" stroke-linejoin="round" stroke-linecap="round"/>
<polyline points="706.2,637.4 735.0,662.0 763.8,670.3 796.7,686.7" fill="none" stroke="#b4b0ab" stroke-width="0.9" stroke-linejoin="round" stroke-linecap="round"/>
<polyline points="591.1,604.5 632.2,596.2 673.4,604.5 714.5,592.1 755.6,579.8" fill="none" stroke="#b4b0ab" stroke-width="0.9" stroke-linejoin="round" stroke-linecap="round"/>
<polyline points="550.0,653.8 591.1,645.6 632.2,657.9 673.4,670.3" fill="none" stroke="#b4b0ab" stroke-width="0.9" stroke-linejoin="round" stroke-linecap="round"/>
<polyline points="837.8,583.9 862.5,604.5 887.2,612.7 934.0,612.7" fill="none" stroke="#b4b0ab" stroke-width="0.9" stroke-linejoin="round" stroke-linecap="round"/>
<polyline points="887.2,497.6 911.8,505.8 934.0,501.7" fill="none" stroke="#b4b0ab" stroke-width="0.9" stroke-linejoin="round" stroke-linecap="round"/>
<polyline points="796.7,633.3 813.2,670.3 821.4,699.9" fill="none" stroke="#b4b0ab" stroke-width="0.9" stroke-linejoin="round" stroke-linecap="round"/>
<polyline points="611.7,625.0 624.0,666.2 640.5,699.9" fill="none" stroke="#b4b0ab" stroke-width="0.9" stroke-linejoin="round" stroke-linecap="round"/>
<polyline points="550.0,274.7 591.1,282.9 624.0,299.3 648.7,324.0 652.8,344.6" fill="none" stroke="#b4b0ab" stroke-width="0.9" stroke-linejoin="round" stroke-linecap="round"/>
<polyline points="669.2,250.0 673.4,274.7 681.6,311.7" fill="none" stroke="#b4b0ab" stroke-width="0.9" stroke-linejoin="round" stroke-linecap="round"/>
<polyline points="780.3,324.0 804.9,303.5 837.8,282.9 878.9,266.4 934.0,258.2" fill="none" stroke="#b4b0ab" stroke-width="0.9" stroke-linejoin="round" stroke-linecap="round"/>
<polyline points="796.7,270.6 837.8,299.3 878.9,332.2 911.8,365.1 934.0,373.4" fill="none" stroke="#b4b0ab" stroke-width="0.9" stroke-linejoin="round" stroke-linecap="round"/>
<polyline points="813.2,340.5 846.1,356.9 878.9,373.4 934.0,385.7" fill="none" stroke="#b4b0ab" stroke-width="0.9" stroke-linejoin="round" stroke-linecap="round"/>
<polyline points="796.7,291.1 804.9,332.2 796.7,356.9" fill="none" stroke="#b4b0ab" stroke-width="0.9" stroke-linejoin="round" stroke-linecap="round"/>
<polyline points="837.8,365.1 870.7,385.7 903.6,398.0 934.0,402.1" fill="none" stroke="#b4b0ab" stroke-width="0.9" stroke-linejoin="round" stroke-linecap="round"/>
<polyline points="591.1,332.2 615.8,356.9 632.2,373.4" fill="none" stroke="#b4b0ab" stroke-width="0.9" stroke-linejoin="round" stroke-linecap="round"/>
<polyline points="706.2,274.7 722.7,299.3 730.9,332.2" fill="none" stroke="#b4b0ab" stroke-width="0.9" stroke-linejoin="round" stroke-linecap="round"/>
<polyline points="862.5,303.5 891.3,324.0 920.1,319.9" fill="none" stroke="#b4b0ab" stroke-width="0.9" stroke-linejoin="round" stroke-linecap="round"/>
<polyline points="641.2,71.0 632.4,88.6 632.4,108.3 636.8,117.1 642.3,156.7 653.3,180.8 664.2,211.6 670.8,235.8 666.4,256.0 673.0,267.0 681.8,293.3 684.0,313.1" fill="none" stroke="#6f6f6f" stroke-width="1.1" stroke-linejoin="round" stroke-linecap="round"/>
<polyline points="642.3,151.2 668.6,134.7 695.0,109.4 699.4,88.6 717.0,75.4" fill="none" stroke="#6f6f6f" stroke-width="1.1" stroke-linejoin="round" stroke-linecap="round"/>
<polyline points="554.4,110.5 552.2,154.5" fill="none" stroke="#6f6f6f" stroke-width="1.1" stroke-linejoin="round" stroke-linecap="round"/>
<polyline points="550.0,209.4 576.4,227.0" fill="none" stroke="#6f6f6f" stroke-width="1.1" stroke-linejoin="round" stroke-linecap="round"/>
<polyline points="860.6,71.0 873.8,97.4" fill="none" stroke="#6f6f6f" stroke-width="1.1" stroke-linejoin="round" stroke-linecap="round"/>
<polyline points="934.0,152.3 902.4,185.2 900.2,202.8" fill="none" stroke="#6f6f6f" stroke-width="1.1" stroke-linejoin="round" stroke-linecap="round"/>
<polyline points="895.8,205.0 851.8,246.7" fill="none" stroke="#6f6f6f" stroke-width="1.1" stroke-linejoin="round" stroke-linecap="round"/>
<polyline points="792.5,154.5 796.9,172.0 792.5,194.0 770.6,216.0 764.0,256.0" fill="none" stroke="#6f6f6f" stroke-width="1.1" stroke-linejoin="round" stroke-linecap="round"/>
<polyline points="578.6,260.4 602.7,273.6 646.7,321.9 648.9,339.5" fill="none" stroke="#6f6f6f" stroke-width="1.1" stroke-linejoin="round" stroke-linecap="round"/>
<polyline points="550.0,396.6 607.1,363.6 642.3,326.3 681.8,315.3 695.0,315.3 725.7,328.5" fill="none" stroke="#6f6f6f" stroke-width="1.1" stroke-linejoin="round" stroke-linecap="round"/>
<polyline points="550.0,402.1 611.5,408.7" fill="none" stroke="#6f6f6f" stroke-width="1.1" stroke-linejoin="round" stroke-linecap="round"/>
<polyline points="849.6,256.0 816.7,306.5" fill="none" stroke="#6f6f6f" stroke-width="1.1" stroke-linejoin="round" stroke-linecap="round"/>
<polyline points="781.5,328.5 807.9,317.5" fill="none" stroke="#6f6f6f" stroke-width="1.1" stroke-linejoin="round" stroke-linecap="round"/>
<polyline points="834.3,425.2 895.8,416.4 934.0,414.2" fill="none" stroke="#6f6f6f" stroke-width="1.1" stroke-linejoin="round" stroke-linecap="round"/>
<polyline points="764.0,256.0 746.4,282.4 744.2,339.5" fill="none" stroke="#6f6f6f" stroke-width="1.1" stroke-linejoin="round" stroke-linecap="round"/>
<polyline points="550.0,460.8 552.2,500.3 550.0,511.3" fill="none" stroke="#6f6f6f" stroke-width="1.1" stroke-linejoin="round" stroke-linecap="round"/>
<polyline points="550.0,511.3 572.0,526.7 611.5,555.2 655.4,561.8 673.0,550.8 742.0,537.7" fill="none" stroke="#6f6f6f" stroke-width="1.1" stroke-linejoin="round" stroke-linecap="round"/>
<polyline points="613.7,513.5 589.5,555.2 550.0,586.0" fill="none" stroke="#6f6f6f" stroke-width="1.1" stroke-linejoin="round" stroke-linecap="round"/>
<polyline points="690.6,504.7 675.2,581.6 673.0,612.4 664.2,626.0" fill="none" stroke="#6f6f6f" stroke-width="1.1" stroke-linejoin="round" stroke-linecap="round"/>
<polyline points="742.0,535.5 781.5,511.3" fill="none" stroke="#6f6f6f" stroke-width="1.1" stroke-linejoin="round" stroke-linecap="round"/>
<polyline points="757.4,531.1 777.1,528.9 795.0,520.0" fill="none" stroke="#6f6f6f" stroke-width="1.1" stroke-linejoin="round" stroke-linecap="round"/>
<polyline points="821.1,524.5 832.1,553.0 829.9,626.0" fill="none" stroke="#6f6f6f" stroke-width="1.1" stroke-linejoin="round" stroke-linecap="round"/>
<polyline points="838.7,570.6 895.8,581.6 934.0,592.6" fill="none" stroke="#6f6f6f" stroke-width="1.1" stroke-linejoin="round" stroke-linecap="round"/>
<polyline points="882.6,493.7 934.0,501.4" fill="none" stroke="#6f6f6f" stroke-width="1.1" stroke-linejoin="round" stroke-linecap="round"/>
<polyline points="657.6,634.8 655.4,683.1 642.3,702.9 620.3,727.1 602.7,744.6 593.9,766.6 583.0,784.2 575.0,800.0" fill="none" stroke="#6f6f6f" stroke-width="1.1" stroke-linejoin="round" stroke-linecap="round"/>
<polyline points="657.6,739.1 717.0,713.9 714.8,683.1 738.9,639.2 745.0,630.0" fill="none" stroke="#6f6f6f" stroke-width="1.1" stroke-linejoin="round" stroke-linecap="round"/>
<polyline points="825.5,626.0 824.4,643.6 836.5,669.9 860.6,707.3 869.4,729.3 867.2,760.0 900.2,793.0 915.0,811.0" fill="none" stroke="#6f6f6f" stroke-width="1.1" stroke-linejoin="round" stroke-linecap="round"/>
<polyline points="748.6,637.0 764.0,683.1 777.1,740.2 801.3,788.6" fill="none" stroke="#6f6f6f" stroke-width="1.1" stroke-linejoin="round" stroke-linecap="round"/>
<polyline points="733.0,526.3 743.3,575.7 747.4,620.9 755.6,653.8 767.9,699.9" fill="none" stroke="#6f6f6f" stroke-width="1.1" stroke-linejoin="round" stroke-linecap="round"/>
<polyline points="628.0,86.4 625.8,110.5 629.1,156.7 633.5,185.2 637.9,194.0 651.0,207.2 659.8,224.8 661.0,232.5" fill="none" stroke="#f1b46c" stroke-width="1.5" stroke-linejoin="round" stroke-linecap="round"/>
<polyline points="550.0,155.6 585.1,155.6 620.3,161.1 626.9,157.8 659.8,157.8 675.2,163.3 686.2,160.0 703.8,165.5 713.7,174.2" fill="none" stroke="#f1b46c" stroke-width="1.5" stroke-linejoin="round" stroke-linecap="round"/>
<polyline points="679.6,161.1 699.4,139.1 701.6,114.9 708.2,93.0 719.2,73.2" fill="none" stroke="#f1b46c" stroke-width="1.5" stroke-linejoin="round" stroke-linecap="round"/>
<polyline points="756.3,172.0 788.1,186.3 810.1,190.7 825.5,187.4 851.8,192.9 856.2,198.4 873.8,200.6 895.8,201.7 922.1,208.3 934.0,213.8" fill="none" stroke="#f1b46c" stroke-width="1.5" stroke-linejoin="round" stroke-linecap="round"/>
<polyline points="913.4,207.2 917.7,256.0 915.5,310.9 913.4,321.9 934.0,326.3" fill="none" stroke="#f1b46c" stroke-width="1.5" stroke-linejoin="round" stroke-linecap="round"/>
<polyline points="902.4,120.4 934.0,119.3" fill="none" stroke="#f1b46c" stroke-width="1.5" stroke-linejoin="round" stroke-linecap="round"/>
<polyline points="681.8,300.0 684.0,317.5" fill="none" stroke="#f1b46c" stroke-width="1.5" stroke-linejoin="round" stroke-linecap="round"/>
<polyline points="699.4,322.0 721.4,339.5" fill="none" stroke="#f1b46c" stroke-width="1.5" stroke-linejoin="round" stroke-linecap="round"/>
<polyline points="810.1,376.8 821.1,361.4 860.6,348.3 882.6,337.3 915.5,310.9 934.0,293.3" fill="none" stroke="#f1b46c" stroke-width="1.5" stroke-linejoin="round" stroke-linecap="round"/>
<polyline points="742.0,260.4 764.0,269.2 781.5,278.0" fill="none" stroke="#f1b46c" stroke-width="1.5" stroke-linejoin="round" stroke-linecap="round"/>
<polyline points="834.3,405.4 847.4,399.9" fill="none" stroke="#f1b46c" stroke-width="1.5" stroke-linejoin="round" stroke-linecap="round"/>
<polyline points="703.8,520.0 734.5,526.7 742.0,527.8" fill="none" stroke="#f1b46c" stroke-width="1.5" stroke-linejoin="round" stroke-linecap="round"/>
<polyline points="550.0,463.0 563.2,487.1 572.0,493.7" fill="none" stroke="#f1b46c" stroke-width="1.5" stroke-linejoin="round" stroke-linecap="round"/>
<polyline points="583.0,463.0 600.5,458.6 609.3,454.2" fill="none" stroke="#f1b46c" stroke-width="1.5" stroke-linejoin="round" stroke-linecap="round"/>
<polyline points="589.5,513.5 580.8,555.2 569.8,581.6 556.6,612.4" fill="none" stroke="#f1b46c" stroke-width="1.5" stroke-linejoin="round" stroke-linecap="round"/>
<polyline points="550.0,628.2 574.7,622.0 585.0,630.3 603.4,635.4 622.0,634.4 636.3,629.2 646.6,628.2" fill="none" stroke="#f1b46c" stroke-width="1.5" stroke-linejoin="round" stroke-linecap="round"/>
<polyline points="671.3,634.4 681.6,633.4 693.9,624.1 706.2,624.1 742.0,626.2" fill="none" stroke="#f1b46c" stroke-width="1.5" stroke-linejoin="round" stroke-linecap="round"/>
<polyline points="550.0,762.2 576.4,784.2 615.9,789.7 670.8,784.2 742.0,779.8" fill="none" stroke="#f1b46c" stroke-width="1.5" stroke-linejoin="round" stroke-linecap="round"/>
<polyline points="607.1,740.2 604.9,788.6" fill="none" stroke="#f1b46c" stroke-width="1.5" stroke-linejoin="round" stroke-linecap="round"/>
<polyline points="753.0,626.0 764.0,676.5 777.1,742.4 755.2,775.4 742.0,781.0" fill="none" stroke="#f1b46c" stroke-width="1.5" stroke-linejoin="round" stroke-linecap="round"/>
<polyline points="849.6,626.0 876.0,669.9 884.8,702.9 909.0,711.7 934.0,727.1" fill="none" stroke="#f1b46c" stroke-width="1.5" stroke-linejoin="round" stroke-linecap="round"/>
<polyline points="884.8,626.0 913.4,630.4 924.0,626.0" fill="none" stroke="#f1b46c" stroke-width="1.5" stroke-linejoin="round" stroke-linecap="round"/>
<polyline points="678.0,519.2 705.4,524.7 732.8,527.4 746.5,530.2 768.5,527.4 782.2,521.9" fill="none" stroke="#f1b46c" stroke-width="1.5" stroke-linejoin="round" stroke-linecap="round"/>
<polyline points="768.5,615.1 801.4,609.6 831.5,612.4 864.4,615.1 891.8,620.6 934.0,631.6" fill="none" stroke="#f1b46c" stroke-width="1.5" stroke-linejoin="round" stroke-linecap="round"/>
<polyline points="831.5,582.2 839.7,609.6 853.4,640.1" fill="none" stroke="#f1b46c" stroke-width="1.5" stroke-linejoin="round" stroke-linecap="round"/>
<polyline points="661.0,232.5 648.9,256.0 654.4,278.0 651.0,293.3" fill="none" stroke="#f4a48a" stroke-width="1.6" stroke-linejoin="round" stroke-linecap="round"/>
<polyline points="554.4,409.8 611.5,416.4" fill="none" stroke="#f4a48a" stroke-width="1.6" stroke-linejoin="round" stroke-linecap="round"/>
<polyline points="600.5,511.3 633.5,523.4 659.8,531.1 679.6,535.5 684.0,542.0 681.8,572.8 677.4,594.8 659.8,603.6 659.8,626.0" fill="none" stroke="#f4a48a" stroke-width="1.6" stroke-linejoin="round" stroke-linecap="round"/>
<polyline points="679.6,535.5 703.8,513.5 717.0,496.0" fill="none" stroke="#f4a48a" stroke-width="1.6" stroke-linejoin="round" stroke-linecap="round"/>
<polyline points="668.6,626.0 671.9,643.6 664.2,670.0 659.8,687.5 646.7,696.3 618.1,701.8 612.6,711.7 618.1,729.3" fill="none" stroke="#f4a48a" stroke-width="1.6" stroke-linejoin="round" stroke-linecap="round"/>
<polyline points="741.0,524.7 752.0,541.1 752.0,560.3 757.5,582.2 752.0,615.1 749.3,640.1" fill="none" stroke="#f4a48a" stroke-width="1.6" stroke-linejoin="round" stroke-linecap="round"/>
<polyline points="912.3,71.0 909.0,99.6 904.6,119.3 895.8,132.5 867.2,161.1 847.4,185.2 842.0,200.6 832.1,216.0 812.3,231.4 792.5,256.0 790.3,278.0 799.1,300.0 803.5,321.9 800.2,350.5 792.5,357.0" fill="none" stroke="#dd5c7c" stroke-width="1.9" stroke-linejoin="round" stroke-linecap="round"/>
<polyline points="550.0,284.6 567.6,289.0 593.9,292.2 646.7,294.4 668.6,296.6 681.8,296.6 703.8,306.5 725.7,310.9 742.0,319.7" fill="none" stroke="#dd5c7c" stroke-width="1.9" stroke-linejoin="round" stroke-linecap="round"/>
<polyline points="567.6,289.0 565.4,317.5 561.0,339.5 552.2,361.4 550.0,387.8" fill="none" stroke="#dd5c7c" stroke-width="1.9" stroke-linejoin="round" stroke-linecap="round"/>
<polyline points="646.7,296.6 662.0,317.5 665.3,335.1" fill="none" stroke="#dd5c7c" stroke-width="1.9" stroke-linejoin="round" stroke-linecap="round"/>
<polyline points="742.0,343.9 775.0,352.7 796.9,357.0 816.7,363.6 834.3,383.4 847.4,398.8 865.0,416.4 882.6,441.0" fill="none" stroke="#dd5c7c" stroke-width="1.9" stroke-linejoin="round" stroke-linecap="round"/>
<polyline points="550.0,572.8 576.4,573.9 598.3,572.8 644.5,575.0 681.8,570.6 742.0,570.6 775.0,561.8 810.1,560.7 838.7,566.2 878.2,557.4 891.4,560.7 913.4,567.3 934.0,564.0" fill="none" stroke="#dd5c7c" stroke-width="1.9" stroke-linejoin="round" stroke-linecap="round"/>
<polyline points="598.3,572.8 607.1,555.2 620.3,548.6 624.7,528.9 626.9,515.7" fill="none" stroke="#dd5c7c" stroke-width="1.9" stroke-linejoin="round" stroke-linecap="round"/>
<polyline points="878.2,557.4 889.2,524.5 895.8,502.5 900.2,474.0 895.8,458.6 882.6,445.4" fill="none" stroke="#dd5c7c" stroke-width="1.9" stroke-linejoin="round" stroke-linecap="round"/>
<polyline points="792.5,524.5 796.9,542.0 799.1,568.4 805.7,594.8 814.5,626.0" fill="none" stroke="#dd5c7c" stroke-width="1.9" stroke-linejoin="round" stroke-linecap="round"/>
<polyline points="814.5,626.0 825.5,654.6 836.5,672.1 836.5,713.9 838.7,742.4 856.2,771.0 871.6,790.8 884.8,811.0" fill="none" stroke="#dd5c7c" stroke-width="1.9" stroke-linejoin="round" stroke-linecap="round"/>
<polyline points="782.2,508.2 795.9,524.7 796.4,543.9 795.9,554.8" fill="none" stroke="#dd5c7c" stroke-width="1.9" stroke-linejoin="round" stroke-linecap="round"/>
<g font-family="Liberation Sans, sans-serif">
<text x="611.1" y="86.4" font-size="10" textLength="37.8" lengthAdjust="spacingAndGlyphs" fill="#404040" stroke="#fff" stroke-width="2.4" stroke-opacity="0.8" stroke-linejoin="round" paint-order="stroke">Gransee</text>
<text x="525.1" y="109.4" font-size="10" textLength="63.3" lengthAdjust="spacingAndGlyphs" fill="#404040" stroke="#fff" stroke-width="2.4" stroke-opacity="0.8" stroke-linejoin="round" paint-order="stroke">Lindow (Mark)</text>
<text x="681.4" y="106.1" font-size="10" textLength="45.4" lengthAdjust="spacingAndGlyphs" fill="#404040" stroke="#fff" stroke-width="2.4" stroke-opacity="0.8" stroke-linejoin="round" paint-order="stroke">Zehdenick</text>
<text x="702.1" y="181.2" font-size="10" textLength="54.3" lengthAdjust="spacingAndGlyphs" fill="#404040" stroke="#fff" stroke-width="2.4" stroke-opacity="0.8" stroke-linejoin="round" paint-order="stroke">Liebenwalde</text>
<text x="573.7" y="193.4" font-size="10" textLength="47.0" lengthAdjust="spacingAndGlyphs" fill="#779c78" stroke="#fff" stroke-width="2.4" stroke-opacity="0.8" stroke-linejoin="round" paint-order="stroke">Rüthnicker</text>
<text x="584.7" y="203.9" font-size="10" textLength="25.7" lengthAdjust="spacingAndGlyphs" fill="#779c78" stroke="#fff" stroke-width="2.4" stroke-opacity="0.8" stroke-linejoin="round" paint-order="stroke">Heide</text>
<text x="553.3" y="259.3" font-size="10" textLength="43.2" lengthAdjust="spacingAndGlyphs" fill="#404040" stroke="#fff" stroke-width="2.4" stroke-opacity="0.8" stroke-linejoin="round" paint-order="stroke">Kremmen</text>
<text x="849" y="107.9" font-size="10" textLength="56.7" lengthAdjust="spacingAndGlyphs" fill="#404040" stroke="#fff" stroke-width="2.4" stroke-opacity="0.8" stroke-linejoin="round" paint-order="stroke">Joachimsthal</text>
<text x="874.7" y="206.8" font-size="10" textLength="51.4" lengthAdjust="spacingAndGlyphs" fill="#404040" stroke="#fff" stroke-width="2.4" stroke-opacity="0.8" stroke-linejoin="round" paint-order="stroke">Eberswalde</text>
<text x="805.7" y="255.1" font-size="10" textLength="45.5" lengthAdjust="spacingAndGlyphs" fill="#404040" stroke="#fff" stroke-width="2.4" stroke-opacity="0.8" stroke-linejoin="round" paint-order="stroke">Biesenthal</text>
<text x="639.6" y="264.3" font-size="10" textLength="54.3" lengthAdjust="spacingAndGlyphs" fill="#404040" stroke="#fff" stroke-width="2.4" stroke-opacity="0.8" stroke-linejoin="round" paint-order="stroke">Oranienburg</text>
<text x="624.3" y="309.8" font-size="10" textLength="26.8" lengthAdjust="spacingAndGlyphs" fill="#404040" stroke="#fff" stroke-width="2.4" stroke-opacity="0.8" stroke-linejoin="round" paint-order="stroke">Velten</text>
<text x="566.5" y="319.7" font-size="10" textLength="32.3" lengthAdjust="spacingAndGlyphs" fill="#779c78" stroke="#fff" stroke-width="2.4" stroke-opacity="0.8" stroke-linejoin="round" paint-order="stroke">Krämer</text>
<text x="623.6" y="345" font-size="10" textLength="50.9" lengthAdjust="spacingAndGlyphs" fill="#404040" stroke="#fff" stroke-width="2.4" stroke-opacity="0.8" stroke-linejoin="round" paint-order="stroke">Hennigsdorf</text>
<text x="577.5" y="397.7" font-size="10" textLength="44.5" lengthAdjust="spacingAndGlyphs" fill="#404040" stroke="#fff" stroke-width="2.4" stroke-opacity="0.8" stroke-linejoin="round" paint-order="stroke">Falkensee</text>
<text x="773.9" y="316" font-size="10" textLength="74.6" lengthAdjust="spacingAndGlyphs" fill="#404040" stroke="#fff" stroke-width="2.4" stroke-opacity="0.8" stroke-linejoin="round" paint-order="stroke">Bernau bei Berlin</text>
<text x="772.8" y="337.3" font-size="10" textLength="37.3" lengthAdjust="spacingAndGlyphs" fill="#404040" stroke="#fff" stroke-width="2.4" stroke-opacity="0.8" stroke-linejoin="round" paint-order="stroke">Panketal</text>
<text x="844.2" y="347.6" font-size="10" textLength="56.0" lengthAdjust="spacingAndGlyphs" fill="#404040" stroke="#fff" stroke-width="2.4" stroke-opacity="0.8" stroke-linejoin="round" paint-order="stroke">Werneuchen</text>
<text x="778.2" y="385.6" font-size="10" textLength="52.8" lengthAdjust="spacingAndGlyphs" fill="#404040" stroke="#fff" stroke-width="2.4" stroke-opacity="0.8" stroke-linejoin="round" paint-order="stroke">Ahrensfelde</text>
<text x="840.9" y="397.7" font-size="10" textLength="54.9" lengthAdjust="spacingAndGlyphs" fill="#404040" stroke="#fff" stroke-width="2.4" stroke-opacity="0.8" stroke-linejoin="round" paint-order="stroke">Altlandsberg</text>
<text x="911.2" y="384" font-size="10" textLength="48.8" lengthAdjust="spacingAndGlyphs" fill="#404040" stroke="#fff" stroke-width="2.4" stroke-opacity="0.8" stroke-linejoin="round" paint-order="stroke">Strausberg</text>
<text x="564.3" y="509.5" font-size="12.3" textLength="49.4" lengthAdjust="spacingAndGlyphs" fill="#404040" stroke="#fff" stroke-width="2.4" stroke-opacity="0.8" stroke-linejoin="round" paint-order="stroke">Potsdam</text>
<text x="626.9" y="519" font-size="10" textLength="48.3" lengthAdjust="spacingAndGlyphs" fill="#404040" stroke="#fff" stroke-width="2.4" stroke-opacity="0.8" stroke-linejoin="round" paint-order="stroke">Stahnsdorf</text>
<text x="500" y="528.9" font-size="10" textLength="67.6" lengthAdjust="spacingAndGlyphs" fill="#404040" stroke="#fff" stroke-width="2.4" stroke-opacity="0.8" stroke-linejoin="round" paint-order="stroke">Werder (Havel)</text>
<text x="552.2" y="567.3" font-size="10" textLength="49.4" lengthAdjust="spacingAndGlyphs" fill="#404040" stroke="#fff" stroke-width="2.4" stroke-opacity="0.8" stroke-linejoin="round" paint-order="stroke">Michendorf</text>
<text x="644.5" y="577.2" font-size="10" textLength="57.1" lengthAdjust="spacingAndGlyphs" fill="#404040" stroke="#fff" stroke-width="2.4" stroke-opacity="0.8" stroke-linejoin="round" paint-order="stroke">Ludwigsfelde</text>
<text x="535.4" y="622.2" font-size="10" textLength="30.0" lengthAdjust="spacingAndGlyphs" fill="#404040" stroke="#fff" stroke-width="2.4" stroke-opacity="0.8" stroke-linejoin="round" paint-order="stroke">Beelitz</text>
<text x="824.4" y="449.8" font-size="10" textLength="67.0" lengthAdjust="spacingAndGlyphs" fill="#404040" stroke="#fff" stroke-width="2.4" stroke-opacity="0.8" stroke-linejoin="round" paint-order="stroke">Schöneiche bei</text>
<text x="845.3" y="459.7" font-size="10" textLength="24.1" lengthAdjust="spacingAndGlyphs" fill="#404040" stroke="#fff" stroke-width="2.4" stroke-opacity="0.8" stroke-linejoin="round" paint-order="stroke">Berlin</text>
<text x="867.2" y="491.5" font-size="10" textLength="28.6" lengthAdjust="spacingAndGlyphs" fill="#404040" stroke="#fff" stroke-width="2.4" stroke-opacity="0.8" stroke-linejoin="round" paint-order="stroke">Erkner</text>
<text x="811.2" y="573.9" font-size="10" textLength="29.7" lengthAdjust="spacingAndGlyphs" fill="#404040" stroke="#fff" stroke-width="2.4" stroke-opacity="0.8" stroke-linejoin="round" paint-order="stroke">Königs</text>
<text x="794.7" y="583.8" font-size="10" textLength="62.6" lengthAdjust="spacingAndGlyphs" fill="#404040" stroke="#fff" stroke-width="2.4" stroke-opacity="0.8" stroke-linejoin="round" paint-order="stroke">Wusterhausen</text>
<text x="762.9" y="603.6" font-size="10" textLength="52.7" lengthAdjust="spacingAndGlyphs" fill="#404040" stroke="#fff" stroke-width="2.4" stroke-opacity="0.8" stroke-linejoin="round" paint-order="stroke">Mittenwalde</text>
<text x="922.1" y="611.3" font-size="10" textLength="36.1" lengthAdjust="spacingAndGlyphs" fill="#404040" stroke="#fff" stroke-width="2.4" stroke-opacity="0.8" stroke-linejoin="round" paint-order="stroke">Storkow</text>
<text x="637.9" y="637.4" font-size="10" textLength="31.8" lengthAdjust="spacingAndGlyphs" fill="#404040" stroke="#fff" stroke-width="2.4" stroke-opacity="0.8" stroke-linejoin="round" paint-order="stroke">Trebbin</text>
<text x="608.2" y="723.1" font-size="10" textLength="57.1" lengthAdjust="spacingAndGlyphs" fill="#404040" stroke="#fff" stroke-width="2.4" stroke-opacity="0.8" stroke-linejoin="round" paint-order="stroke">Luckenwalde</text>
<text x="578.6" y="791.2" font-size="10" textLength="37.3" lengthAdjust="spacingAndGlyphs" fill="#404040" stroke="#fff" stroke-width="2.4" stroke-opacity="0.8" stroke-linejoin="round" paint-order="stroke">Jüterbog</text>
<text x="736.4" y="636.2" font-size="10" textLength="31.5" lengthAdjust="spacingAndGlyphs" fill="#404040" stroke="#fff" stroke-width="2.4" stroke-opacity="0.8" stroke-linejoin="round" paint-order="stroke">Zossen</text>
<text x="804.6" y="691.9" font-size="10" textLength="31.9" lengthAdjust="spacingAndGlyphs" fill="#404040" stroke="#fff" stroke-width="2.4" stroke-opacity="0.8" stroke-linejoin="round" paint-order="stroke">Teupitz</text>
<text x="858.6" y="667.5" font-size="10" textLength="93.4" lengthAdjust="spacingAndGlyphs" fill="#3d9a46" stroke="#fff" stroke-width="2.4" stroke-opacity="0.8" stroke-linejoin="round" paint-order="stroke">Dahme-Heideseen</text>
<text x="843.1" y="709.5" font-size="10" textLength="83.4" lengthAdjust="spacingAndGlyphs" fill="#404040" stroke="#fff" stroke-width="2.4" stroke-opacity="0.8" stroke-linejoin="round" paint-order="stroke">Märkisch Buchholz</text>
<text x="747.5" y="753.4" font-size="10" textLength="53.8" lengthAdjust="spacingAndGlyphs" fill="#404040" stroke="#fff" stroke-width="2.4" stroke-opacity="0.8" stroke-linejoin="round" paint-order="stroke">Baruth/Mark</text>
</g>
<clipPath id="bc"><path d="M611.7 420.0 L613.3 414.2 L615.7 401.4 L618.9 398.1 L624.5 398.1 L625.3 390.1 L628.5 380.5 L626.1 378.1 L618.1 378.1 L618.1 374.9 L629.3 368.4 L638.2 370.0 L646.2 373.3 L654.2 374.1 L654.2 370.0 L649.4 366.0 L648.6 361.2 L653.4 354.8 L657.4 347.6 L663.9 346.0 L673.5 344.3 L674.3 338.7 L682.3 338.7 L683.1 325.9 L692.8 325.9 L692.0 331.5 L690.4 337.1 L691.2 347.6 L702.4 350.0 L718.5 348.4 L725.7 341.1 L729.7 333.9 L737.7 336.3 L742.0 341.1 L746.1 337.9 L750.9 332.3 L759.7 330.7 L762.9 327.5 L760.5 324.3 L754.1 322.7 L756.5 319.5 L761.3 318.6 L763.7 313.8 L768.5 317.0 L767.7 322.7 L769.3 328.3 L776.6 332.3 L781.4 334.7 L781.4 343.5 L775.8 348.4 L774.2 356.4 L772.6 364.4 L776.6 370.8 L784.6 372.4 L794.2 376.5 L800.7 381.3 L807.9 386.1 L810.3 394.9 L811.9 401.4 L819.9 404.6 L831.2 407.0 L828.0 414.2 L840.8 416.6 L837.6 422.2 L831.5 426.4 L827.5 437.7 L823.5 448.1 L821.9 457.7 L825.1 459.3 L827.5 454.5 L834.7 451.3 L842.8 453.7 L852.4 458.5 L858.8 461.8 L859.6 467.4 L865.3 464.2 L870.1 469.8 L880.5 473.0 L882.9 479.4 L875.7 480.2 L873.3 484.2 L871.7 490.7 L874.9 500.3 L868.5 506.7 L855.6 513.1 L852.4 516.4 L857.2 519.6 L857.2 525.2 L846.8 526.8 L842.0 530.8 L838.0 538.8 L836.4 546.9 L832.3 545.3 L831.5 535.6 L834.7 529.2 L833.1 521.2 L825.1 518.8 L818.7 520.4 L816.3 513.9 L813.1 509.1 L805.8 509.9 L796.2 513.1 L789.0 511.5 L788.2 506.7 L783.4 505.1 L772.1 505.9 L764.9 507.5 L762.5 501.9 L760.1 492.3 L756.1 490.7 L748.0 494.7 L738.5 498.7 L739.3 506.7 L740.0 521.2 L731.3 521.2 L726.5 514.7 L718.5 509.9 L712.0 502.7 L707.2 497.9 L699.2 500.3 L692.8 505.1 L688.0 495.5 L682.3 496.3 L678.3 501.9 L668.7 501.1 L665.5 492.3 L657.4 490.7 L649.4 493.9 L638.2 498.7 L630.1 503.5 L636.0 505.0 L636.0 510.0 L628.5 510.0 L621.3 507.0 L618.1 514.7 L615.7 511.5 L609.3 498.7 L601.2 497.1 L599.6 492.3 L609.3 484.2 L614.9 478.6 L610.9 469.8 L609.3 461.8 L610.9 453.7 L615.7 448.9 L625.3 439.3 L634.2 429.6 L626.9 425.6 L612.5 424.0 Z"/></clipPath>
<path d="M611.7 420.0 L613.3 414.2 L615.7 401.4 L618.9 398.1 L624.5 398.1 L625.3 390.1 L628.5 380.5 L626.1 378.1 L618.1 378.1 L618.1 374.9 L629.3 368.4 L638.2 370.0 L646.2 373.3 L654.2 374.1 L654.2 370.0 L649.4 366.0 L648.6 361.2 L653.4 354.8 L657.4 347.6 L663.9 346.0 L673.5 344.3 L674.3 338.7 L682.3 338.7 L683.1 325.9 L692.8 325.9 L692.0 331.5 L690.4 337.1 L691.2 347.6 L702.4 350.0 L718.5 348.4 L725.7 341.1 L729.7 333.9 L737.7 336.3 L742.0 341.1 L746.1 337.9 L750.9 332.3 L759.7 330.7 L762.9 327.5 L760.5 324.3 L754.1 322.7 L756.5 319.5 L761.3 318.6 L763.7 313.8 L768.5 317.0 L767.7 322.7 L769.3 328.3 L776.6 332.3 L781.4 334.7 L781.4 343.5 L775.8 348.4 L774.2 356.4 L772.6 364.4 L776.6 370.8 L784.6 372.4 L794.2 376.5 L800.7 381.3 L807.9 386.1 L810.3 394.9 L811.9 401.4 L819.9 404.6 L831.2 407.0 L828.0 414.2 L840.8 416.6 L837.6 422.2 L831.5 426.4 L827.5 437.7 L823.5 448.1 L821.9 457.7 L825.1 459.3 L827.5 454.5 L834.7 451.3 L842.8 453.7 L852.4 458.5 L858.8 461.8 L859.6 467.4 L865.3 464.2 L870.1 469.8 L880.5 473.0 L882.9 479.4 L875.7 480.2 L873.3 484.2 L871.7 490.7 L874.9 500.3 L868.5 506.7 L855.6 513.1 L852.4 516.4 L857.2 519.6 L857.2 525.2 L846.8 526.8 L842.0 530.8 L838.0 538.8 L836.4 546.9 L832.3 545.3 L831.5 535.6 L834.7 529.2 L833.1 521.2 L825.1 518.8 L818.7 520.4 L816.3 513.9 L813.1 509.1 L805.8 509.9 L796.2 513.1 L789.0 511.5 L788.2 506.7 L783.4 505.1 L772.1 505.9 L764.9 507.5 L762.5 501.9 L760.1 492.3 L756.1 490.7 L748.0 494.7 L738.5 498.7 L739.3 506.7 L740.0 521.2 L731.3 521.2 L726.5 514.7 L718.5 509.9 L712.0 502.7 L707.2 497.9 L699.2 500.3 L692.8 505.1 L688.0 495.5 L682.3 496.3 L678.3 501.9 L668.7 501.1 L665.5 492.3 L657.4 490.7 L649.4 493.9 L638.2 498.7 L630.1 503.5 L636.0 505.0 L636.0 510.0 L628.5 510.0 L621.3 507.0 L618.1 514.7 L615.7 511.5 L609.3 498.7 L601.2 497.1 L599.6 492.3 L609.3 484.2 L614.9 478.6 L610.9 469.8 L609.3 461.8 L610.9 453.7 L615.7 448.9 L625.3 439.3 L634.2 429.6 L626.9 425.6 L612.5 424.0 Z" fill="#ff0000" fill-opacity="0.46"/>
<g clip-path="url(#bc)">
<path d="M813.9 456.9 L826.7 453.7 L842.8 460.1 L855.6 465.0 L868.5 474.6 L873.3 481.0 L868.5 497.1 L862.0 509.9 L852.4 519.6 L844.4 526.0 L836.4 522.8 L829.9 513.1 L820.3 503.5 L815.5 489.1 L812.3 473.0 Z" fill="#c0503a" fill-opacity="0.35"/>
<path d="M764.1 329.1 L781.8 329.1 L781.8 343.5 L764.1 343.5 Z" fill="#c0503a" fill-opacity="0.35"/>
<path d="M657.0 368.5 L670.3 351.4 L683.6 351.4 L685.5 364.7 L676.0 378.0 L662.7 385.6 L655.1 379.9 Z" fill="#c0503a" fill-opacity="0.35"/>
<path d="M626.6 370.4 L653.2 374.2 L657.0 389.4 L634.2 389.4 Z" fill="#c0503a" fill-opacity="0.35"/>
<path d="M638.0 438.8 L649.4 433.1 L674.1 436.9 L677.9 454.0 L668.4 469.2 L647.5 484.4 L624.7 480.6 L615.2 469.2 L622.8 454.0 Z" fill="#c0503a" fill-opacity="0.35"/>
<path d="M611.4 446.4 L628.5 446.4 L628.5 492.0 L611.4 492.0 Z" fill="#c0503a" fill-opacity="0.35"/>
<path d="M825.1 474.6 L836.4 472.2 L844.4 471.4 L849.2 477.8 L847.6 484.2 L842.8 487.4 L829.9 487.4 L825.1 482.6 Z" fill="#a04a70" fill-opacity="0.35"/>
<path d="M662.7 385.6 L677.9 376.1 L676.0 389.4 L662.7 397.0 L653.2 404.6 L649.4 397.0 Z" fill="#a04a70" fill-opacity="0.35"/>
<path d="M636.1 450.2 L643.7 446.4 L647.5 473.0 L641.8 484.4 L634.2 476.8 Z" fill="#a04a70" fill-opacity="0.35"/>
<polyline points="595.0,318.6 600.9,317.7 606.9,318.6 612.9,318.2 618.5,316.2 624.0,313.8 629.0,310.5" fill="none" stroke="#b44a4a" stroke-width="1.0" stroke-opacity="0.46"/>
<polyline points="739.0,318.9 744.6,316.8 749.5,313.3 754.1,309.4 759.4,306.6 764.0,302.7 768.8,299.1 773.9,296.0 778.7,292.4" fill="none" stroke="#b44a4a" stroke-width="0.7" stroke-opacity="0.46"/>
<polyline points="798.6,316.3 804.5,316.9 810.0,319.3 815.7,321.2 821.7,322.0" fill="none" stroke="#b44a4a" stroke-width="0.7" stroke-opacity="0.60"/>
<polyline points="829.1,319.0 835.1,318.8 840.8,320.6 846.8,320.8 852.8,320.7 858.7,321.6 864.7,321.1 870.7,320.5 876.2,318.1 881.9,316.3 887.9,315.7" fill="none" stroke="#b44a4a" stroke-width="0.8" stroke-opacity="0.61"/>
<polyline points="595.0,325.0 600.9,324.1 606.4,321.5 611.8,318.9 617.5,317.0 622.9,314.4 628.6,312.7 634.1,310.2 639.7,308.1 645.5,306.7 651.3,305.0" fill="none" stroke="#b44a4a" stroke-width="1.0" stroke-opacity="0.56"/>
<polyline points="670.1,325.9 676.0,324.7 681.7,322.6 687.6,321.6 693.4,320.0 699.4,320.3 705.4,320.5 711.2,319.3 717.0,317.7 722.5,315.3 727.4,311.9" fill="none" stroke="#b44a4a" stroke-width="0.8" stroke-opacity="0.56"/>
<polyline points="806.1,322.4 811.8,320.5 817.4,318.6 823.2,317.0 828.7,314.4 833.1,310.4 837.6,306.4 842.0,302.4 846.7,298.6 852.3,296.4" fill="none" stroke="#b44a4a" stroke-width="0.7" stroke-opacity="0.50"/>
<polyline points="704.4,331.5 710.2,332.7 716.2,332.3 722.2,332.3 728.0,330.6 733.8,329.2 739.7,328.0 745.7,328.6" fill="none" stroke="#b44a4a" stroke-width="1.0" stroke-opacity="0.57"/>
<polyline points="756.5,332.0 762.4,331.0 767.9,328.5 773.8,327.3 779.7,328.2" fill="none" stroke="#b44a4a" stroke-width="0.8" stroke-opacity="0.49"/>
<polyline points="791.7,335.9 797.6,336.7 803.6,337.5 809.6,337.0 815.4,338.5 821.3,339.4 827.1,341.1 832.1,344.3" fill="none" stroke="#b44a4a" stroke-width="0.7" stroke-opacity="0.67"/>
<polyline points="595.0,340.8 601.0,340.9 607.0,341.6 612.8,342.8 618.4,345.1 623.4,348.4 629.0,350.6 634.9,351.7 640.8,352.4 646.5,354.3 652.5,355.0" fill="none" stroke="#b44a4a" stroke-width="0.7" stroke-opacity="0.56"/>
<polyline points="735.2,342.6 740.3,345.8 744.4,350.1 748.9,354.1 754.0,357.1 759.7,359.1 765.7,359.9 771.6,359.4" fill="none" stroke="#b44a4a" stroke-width="1.0" stroke-opacity="0.74"/>
<polyline points="661.5,353.1 667.4,353.7 673.2,355.3 679.1,356.7 684.6,359.0 690.6,359.6 696.5,358.8 702.4,360.0 708.3,359.3 714.3,358.9" fill="none" stroke="#b44a4a" stroke-width="0.7" stroke-opacity="0.58"/>
<polyline points="839.3,352.2 845.2,353.2 850.7,355.7 855.4,359.4 860.8,362.1 866.6,363.7 872.5,364.6 878.5,364.3 884.5,364.4" fill="none" stroke="#b44a4a" stroke-width="1.0" stroke-opacity="0.64"/>
<polyline points="595.0,360.7 600.7,362.6 606.5,364.2 611.5,367.4 616.6,370.6 621.6,373.9 626.6,377.3 632.4,378.8" fill="none" stroke="#b44a4a" stroke-width="1.0" stroke-opacity="0.56"/>
<polyline points="645.5,360.8 651.4,361.7 657.4,361.9 663.4,362.1 669.4,362.6 675.1,364.3" fill="none" stroke="#b44a4a" stroke-width="0.7" stroke-opacity="0.50"/>
<polyline points="680.3,357.8 685.9,355.7 691.9,355.2 697.5,353.0 702.7,350.1 708.6,349.0 714.6,348.4 720.3,346.6 725.7,343.9" fill="none" stroke="#b44a4a" stroke-width="0.8" stroke-opacity="0.46"/>
<polyline points="738.1,364.0 744.1,364.3 750.1,364.9 755.6,367.3 760.4,370.9 766.0,373.1 771.9,373.9 777.9,374.4 783.8,373.1 789.3,370.9 794.9,368.6" fill="none" stroke="#b44a4a" stroke-width="0.7" stroke-opacity="0.66"/>
<polyline points="663.0,371.3 669.0,371.4 674.7,373.4 680.4,375.1 686.3,376.5 692.2,377.3 698.1,376.3 703.9,374.9 709.6,372.7 715.1,370.4 720.9,368.9 726.6,367.0" fill="none" stroke="#b44a4a" stroke-width="0.8" stroke-opacity="0.50"/>
<polyline points="778.6,368.2 784.6,368.1 790.6,369.0 796.1,371.2 801.0,374.8 805.4,378.9 809.5,383.2 814.0,387.2 818.3,391.4 822.6,395.5 826.9,399.7 831.7,403.3" fill="none" stroke="#b44a4a" stroke-width="0.7" stroke-opacity="0.48"/>
<polyline points="849.2,366.1 854.7,363.9 860.5,362.2 865.8,359.4 870.5,355.7 874.7,351.4 878.8,347.0 884.2,344.4 889.4,341.4 895.3,340.1 901.2,339.2" fill="none" stroke="#b44a4a" stroke-width="0.7" stroke-opacity="0.53"/>
<polyline points="666.5,379.2 672.4,378.1 678.4,377.8 684.2,376.4 690.2,376.3 695.9,378.3 701.9,378.4" fill="none" stroke="#b44a4a" stroke-width="0.8" stroke-opacity="0.64"/>
<polyline points="759.0,378.5 764.8,379.8 770.8,380.8 776.7,381.7 782.4,383.5 787.4,386.8 792.7,389.7" fill="none" stroke="#b44a4a" stroke-width="1.0" stroke-opacity="0.70"/>
<polyline points="870.4,380.0 876.4,380.8 882.3,379.8 888.3,379.5 894.2,378.7 900.1,377.9 906.0,379.1" fill="none" stroke="#b44a4a" stroke-width="0.7" stroke-opacity="0.45"/>
<polyline points="595.0,387.6 600.9,388.8 606.2,391.6 611.5,394.3 617.2,396.1 622.6,398.9 628.2,401.0 634.0,402.4 640.0,401.8 645.9,400.7" fill="none" stroke="#b44a4a" stroke-width="0.7" stroke-opacity="0.50"/>
<polyline points="658.3,384.7 664.3,384.2 670.3,384.0 676.2,383.4 682.1,381.9 688.0,381.0 693.4,378.4 699.4,377.7" fill="none" stroke="#b44a4a" stroke-width="1.0" stroke-opacity="0.68"/>
<polyline points="825.1,384.4 830.5,386.9 835.7,390.0 840.3,393.8 844.6,398.0 849.9,400.9 855.0,404.0 860.2,407.0" fill="none" stroke="#b44a4a" stroke-width="1.0" stroke-opacity="0.64"/>
<polyline points="670.6,400.7 676.5,400.1 682.1,397.7 686.8,394.0 691.6,390.4 696.3,386.8" fill="none" stroke="#b44a4a" stroke-width="0.7" stroke-opacity="0.64"/>
<polyline points="709.9,393.7 715.8,394.8 721.7,395.8 727.3,398.1 732.2,401.5 737.6,404.0 742.6,407.4 748.0,409.9" fill="none" stroke="#b44a4a" stroke-width="1.0" stroke-opacity="0.72"/>
<polyline points="765.2,398.5 771.1,399.8 776.8,401.6 782.8,401.7 788.6,400.4 794.1,398.0 800.0,396.7 805.6,394.5" fill="none" stroke="#b44a4a" stroke-width="0.7" stroke-opacity="0.59"/>
<polyline points="819.4,393.8 825.4,392.9 831.4,392.9 837.3,392.0 843.2,390.9" fill="none" stroke="#b44a4a" stroke-width="0.8" stroke-opacity="0.74"/>
<polyline points="856.5,400.5 862.3,398.9 868.3,398.6 874.0,400.3 879.9,401.7 885.8,402.2 891.8,401.5 897.7,402.7 903.7,402.6 909.7,402.9 915.5,401.7 921.4,400.6" fill="none" stroke="#b44a4a" stroke-width="0.8" stroke-opacity="0.74"/>
<polyline points="633.6,409.0 639.3,407.3 645.3,407.4 651.3,408.3 657.3,408.8 663.1,410.3 669.0,411.4 674.9,412.0 680.9,411.0 686.6,409.3 692.1,406.9" fill="none" stroke="#b44a4a" stroke-width="0.7" stroke-opacity="0.60"/>
<polyline points="749.4,405.1 755.1,407.0 761.0,408.3 766.9,409.2 772.9,409.3" fill="none" stroke="#b44a4a" stroke-width="0.8" stroke-opacity="0.56"/>
<polyline points="775.7,403.2 781.6,404.3 787.6,404.7 793.4,406.2 798.8,408.8" fill="none" stroke="#b44a4a" stroke-width="0.8" stroke-opacity="0.64"/>
<polyline points="629.8,418.3 635.7,417.1 641.5,415.5 646.9,413.1 652.0,409.8 657.5,407.4 663.2,405.6 668.8,403.5 673.9,400.4" fill="none" stroke="#b44a4a" stroke-width="0.8" stroke-opacity="0.60"/>
<polyline points="689.7,412.7 695.6,413.9 701.6,413.9 707.3,415.6 712.2,419.2 717.1,422.6 722.7,424.6 728.7,425.4 734.6,424.5 740.4,423.0" fill="none" stroke="#b44a4a" stroke-width="1.0" stroke-opacity="0.50"/>
<polyline points="746.2,411.2 752.1,411.8 757.9,413.4 763.9,413.8 769.9,413.3 775.9,413.8" fill="none" stroke="#b44a4a" stroke-width="1.0" stroke-opacity="0.51"/>
<polyline points="789.4,416.0 795.4,415.9 801.3,414.9 806.9,412.8 812.4,410.4 817.9,407.9 823.9,407.3 829.8,408.2 835.3,410.5" fill="none" stroke="#b44a4a" stroke-width="1.0" stroke-opacity="0.60"/>
<polyline points="717.2,420.9 723.0,422.7 728.1,425.8 732.4,429.9 737.8,432.7" fill="none" stroke="#b44a4a" stroke-width="1.0" stroke-opacity="0.74"/>
<polyline points="758.8,425.2 764.4,423.1 769.6,420.0 775.0,417.5 780.7,415.7" fill="none" stroke="#b44a4a" stroke-width="1.0" stroke-opacity="0.73"/>
<polyline points="785.5,422.1 791.4,420.9 797.3,419.8 803.2,420.8 809.2,420.9" fill="none" stroke="#b44a4a" stroke-width="1.0" stroke-opacity="0.51"/>
<polyline points="818.4,422.0 824.0,424.2 829.9,425.6 835.8,425.0 841.8,424.4 847.8,424.6 853.8,424.4 859.7,423.2 865.7,422.7 871.5,424.0 877.5,424.1" fill="none" stroke="#b44a4a" stroke-width="1.0" stroke-opacity="0.52"/>
<polyline points="881.7,420.1 887.7,420.9 893.6,419.9 899.5,418.9 905.1,416.7 911.0,415.5 916.5,413.2" fill="none" stroke="#b44a4a" stroke-width="1.0" stroke-opacity="0.57"/>
<polyline points="633.6,436.3 639.5,435.4 645.4,436.2 651.3,435.2 656.6,432.3 662.0,429.7 667.3,426.8 672.9,424.8 678.0,421.5" fill="none" stroke="#b44a4a" stroke-width="0.7" stroke-opacity="0.60"/>
<polyline points="693.4,436.5 699.1,434.6 705.1,434.6 711.0,435.7 716.9,434.7 722.9,434.5 728.9,433.7 734.7,432.5 740.4,430.5 745.5,427.3" fill="none" stroke="#b44a4a" stroke-width="0.7" stroke-opacity="0.75"/>
<polyline points="750.5,435.1 756.4,435.8 762.4,435.8 768.3,437.0 774.3,436.5 780.2,436.9 786.2,436.0" fill="none" stroke="#b44a4a" stroke-width="0.7" stroke-opacity="0.62"/>
<polyline points="796.2,429.2 802.1,430.3 807.7,432.4 813.7,432.6 819.4,430.9 824.4,427.6 830.2,425.8 835.5,423.1" fill="none" stroke="#b44a4a" stroke-width="1.0" stroke-opacity="0.72"/>
<polyline points="852.5,436.6 858.5,436.3 864.4,436.8 870.0,438.9 875.9,440.3 881.5,442.5 887.0,444.7 892.6,446.8 898.2,449.0 904.2,449.4 910.0,451.2" fill="none" stroke="#b44a4a" stroke-width="0.8" stroke-opacity="0.55"/>
<polyline points="595.0,445.3 601.0,444.7 606.9,444.1 612.4,441.5 618.3,440.7 624.1,439.0 630.0,438.2 635.6,435.9 641.0,433.3 646.9,432.2" fill="none" stroke="#b44a4a" stroke-width="0.8" stroke-opacity="0.69"/>
<polyline points="659.1,444.0 664.6,441.5 669.0,437.5 673.7,433.7 678.2,429.7 683.7,427.4 689.7,426.7 695.5,428.0 701.5,428.4 707.3,427.0 712.6,424.0" fill="none" stroke="#b44a4a" stroke-width="1.0" stroke-opacity="0.51"/>
<polyline points="726.9,441.7 732.9,441.7 738.9,442.0 744.7,443.3 750.2,445.7 755.1,449.1 760.5,451.8 766.2,453.6 772.2,454.5 778.2,454.3" fill="none" stroke="#b44a4a" stroke-width="0.7" stroke-opacity="0.49"/>
<polyline points="787.7,445.1 793.7,444.6 799.6,443.7 805.5,444.8 811.4,445.9 817.4,446.0 823.2,447.3 828.9,449.3" fill="none" stroke="#b44a4a" stroke-width="0.7" stroke-opacity="0.50"/>
<polyline points="847.3,445.3 852.9,443.1 857.7,439.5 861.8,435.1 867.1,432.2" fill="none" stroke="#b44a4a" stroke-width="0.7" stroke-opacity="0.70"/>
<polyline points="595.0,449.1 600.4,451.7 606.3,452.7 612.1,454.2 617.8,456.1 623.8,456.9 629.8,457.1 635.6,455.8 641.1,453.4 646.5,450.7 652.0,448.4 657.8,446.7" fill="none" stroke="#b44a4a" stroke-width="0.7" stroke-opacity="0.58"/>
<polyline points="664.9,452.0 670.1,448.9 675.2,445.8 680.3,442.6 685.2,439.2" fill="none" stroke="#b44a4a" stroke-width="1.0" stroke-opacity="0.56"/>
<polyline points="702.4,448.3 708.4,448.5 714.3,447.8 720.1,446.3 726.1,446.7 732.1,446.3 738.1,446.2 744.1,445.5 750.0,444.4 755.9,444.9" fill="none" stroke="#b44a4a" stroke-width="1.0" stroke-opacity="0.48"/>
<polyline points="772.2,454.5 778.0,452.9 783.1,449.8 787.9,446.3 793.0,443.0 797.8,439.4 803.2,436.9" fill="none" stroke="#b44a4a" stroke-width="1.0" stroke-opacity="0.57"/>
<polyline points="815.5,452.0 821.5,451.6 827.2,449.8 832.6,447.1 838.0,444.5" fill="none" stroke="#b44a4a" stroke-width="0.8" stroke-opacity="0.48"/>
<polyline points="856.7,453.7 862.7,454.1 868.7,453.6 874.7,453.7 880.7,454.3" fill="none" stroke="#b44a4a" stroke-width="0.7" stroke-opacity="0.54"/>
<polyline points="728.6,457.7 734.5,457.5 740.5,456.8 746.1,454.6 751.2,451.4 756.7,449.0 762.6,448.3 768.0,445.7 773.6,443.3" fill="none" stroke="#b44a4a" stroke-width="0.8" stroke-opacity="0.50"/>
<polyline points="882.4,459.1 888.4,458.7 894.2,457.0 899.0,453.5 904.7,451.7 910.4,449.8 916.1,447.7" fill="none" stroke="#b44a4a" stroke-width="1.0" stroke-opacity="0.52"/>
<polyline points="669.0,465.7 675.0,465.6 680.7,463.6 686.5,462.1 691.6,459.0 697.2,456.8 703.1,455.7 709.0,454.7" fill="none" stroke="#b44a4a" stroke-width="0.8" stroke-opacity="0.58"/>
<polyline points="712.8,465.5 718.7,466.7 724.7,466.2 730.4,464.2 736.4,463.8 742.2,462.5 748.2,462.5 754.1,463.7" fill="none" stroke="#b44a4a" stroke-width="0.7" stroke-opacity="0.46"/>
<polyline points="770.8,467.0 776.8,467.0 782.6,468.6 788.4,470.0 794.4,470.5 799.9,472.8 805.5,475.0 810.9,477.6 816.1,480.6 821.8,482.5" fill="none" stroke="#b44a4a" stroke-width="0.8" stroke-opacity="0.63"/>
<polyline points="833.8,470.4 839.8,470.2 845.8,471.2 851.7,470.6 857.7,470.1 863.7,470.2" fill="none" stroke="#b44a4a" stroke-width="1.0" stroke-opacity="0.73"/>
<polyline points="595.0,477.2 601.0,477.1 606.7,479.0 612.2,481.2 618.0,482.9 623.4,485.6 628.8,488.1 634.7,489.3 640.3,491.5 646.3,491.8 652.0,493.5" fill="none" stroke="#b44a4a" stroke-width="1.0" stroke-opacity="0.64"/>
<polyline points="726.1,475.8 732.1,475.7 738.1,475.2 744.0,474.2 749.3,471.4 754.6,468.6 760.0,466.2 764.6,462.3 769.2,458.4 773.9,454.7" fill="none" stroke="#b44a4a" stroke-width="0.7" stroke-opacity="0.67"/>
<polyline points="785.5,478.7 791.5,478.3 797.5,477.9 803.1,475.9 809.1,475.7 815.0,474.5 820.4,471.9 824.8,467.8 829.7,464.2" fill="none" stroke="#b44a4a" stroke-width="0.8" stroke-opacity="0.63"/>
<polyline points="847.1,474.4 852.5,477.0 857.8,479.9 862.9,483.0 867.8,486.6 872.6,490.1 877.4,493.7 882.9,496.0 888.9,496.3 894.7,494.8 900.1,492.3" fill="none" stroke="#b44a4a" stroke-width="0.8" stroke-opacity="0.74"/>
<polyline points="684.3,488.1 690.3,487.7 696.1,486.5 701.8,484.5 707.2,481.9 713.1,480.9 719.1,481.0 725.0,482.1" fill="none" stroke="#b44a4a" stroke-width="1.0" stroke-opacity="0.60"/>
<polyline points="728.0,488.2 733.9,489.3 739.9,489.5 745.8,490.2 751.7,489.3 757.7,490.1 763.2,492.6 768.6,495.1 774.4,496.7 780.4,496.5 786.4,496.8" fill="none" stroke="#b44a4a" stroke-width="0.8" stroke-opacity="0.47"/>
<polyline points="595.0,493.9 600.4,496.4 605.4,499.8 610.7,502.6 615.2,506.6" fill="none" stroke="#b44a4a" stroke-width="0.7" stroke-opacity="0.53"/>
<polyline points="801.4,499.1 807.4,499.5 813.4,500.3 819.3,501.3 825.3,501.0 830.9,498.7 836.2,496.1 841.8,493.9 847.2,491.3 853.2,490.5 859.2,490.7" fill="none" stroke="#b44a4a" stroke-width="1.0" stroke-opacity="0.52"/>
<polyline points="595.0,502.6 600.8,504.1 606.4,506.2 611.3,509.8 615.4,514.1" fill="none" stroke="#b44a4a" stroke-width="1.0" stroke-opacity="0.68"/>
<polyline points="633.7,501.3 639.3,503.6 644.6,506.4 649.1,510.3 653.4,514.5 658.3,518.0 663.9,520.0 669.9,520.4" fill="none" stroke="#b44a4a" stroke-width="0.7" stroke-opacity="0.48"/>
<polyline points="687.4,503.8 693.3,503.2 699.3,503.7 704.9,505.8 710.0,509.0 714.9,512.5" fill="none" stroke="#b44a4a" stroke-width="0.8" stroke-opacity="0.53"/>
<polyline points="778.5,506.6 784.4,505.6 790.4,506.0 796.3,504.7 802.3,504.8" fill="none" stroke="#b44a4a" stroke-width="0.7" stroke-opacity="0.55"/>
<polyline points="807.5,504.9 813.3,506.1 819.3,506.0 825.3,505.9 831.3,505.1" fill="none" stroke="#b44a4a" stroke-width="0.7" stroke-opacity="0.45"/>
<polyline points="740.6,517.1 746.5,517.5 752.5,518.6 758.4,519.0 764.4,518.7 770.4,518.1 776.4,517.6 782.1,515.8 788.1,516.0" fill="none" stroke="#b44a4a" stroke-width="0.8" stroke-opacity="0.73"/>
<polyline points="803.3,516.0 809.3,515.8 815.2,514.9 820.7,512.6 826.7,511.7 832.7,511.4 838.6,512.2 844.6,511.6 850.5,510.7 856.5,510.9 862.5,511.5 868.4,510.6" fill="none" stroke="#b44a4a" stroke-width="1.0" stroke-opacity="0.68"/>
<polyline points="877.7,516.0 883.5,517.5 889.0,519.8 893.5,523.9 897.8,528.0 902.1,532.2 906.9,535.8 912.2,538.6 916.6,542.7 921.5,546.1 925.9,550.2" fill="none" stroke="#b44a4a" stroke-width="0.7" stroke-opacity="0.53"/>
<polyline points="630.3,522.5 636.3,522.1 642.0,520.2 647.2,517.1 652.1,513.7 656.4,509.6" fill="none" stroke="#b44a4a" stroke-width="0.8" stroke-opacity="0.67"/>
<polyline points="736.2,524.9 741.7,522.4 747.6,521.3 753.6,521.1 759.6,521.2 765.5,522.0 771.2,524.0 776.8,526.1 782.4,528.2" fill="none" stroke="#b44a4a" stroke-width="0.7" stroke-opacity="0.53"/>
<polyline points="860.1,524.0 865.9,522.5 871.9,522.1 877.9,522.7 883.8,523.8 889.8,523.8" fill="none" stroke="#b44a4a" stroke-width="0.8" stroke-opacity="0.54"/>
<polyline points="812.7,528.8 818.6,529.2 824.5,530.5 830.3,531.9 836.0,533.8 841.1,536.9 846.2,540.2 851.4,543.1 856.3,546.6" fill="none" stroke="#b44a4a" stroke-width="0.7" stroke-opacity="0.61"/>
<polyline points="865.3,532.9 871.2,532.3 877.1,531.2 882.4,528.3 887.6,525.3 893.4,523.9 899.3,523.0 905.3,522.8 911.3,523.0 917.1,521.5" fill="none" stroke="#b44a4a" stroke-width="0.7" stroke-opacity="0.67"/>
<polyline points="762.7,538.8 768.7,539.6 774.5,540.9 779.9,543.5 784.6,547.3 789.4,550.9 794.6,553.8 799.8,556.9 805.6,558.5 810.8,561.4 816.3,563.8" fill="none" stroke="#b44a4a" stroke-width="1.0" stroke-opacity="0.62"/>
<polyline points="836.4,542.4 842.3,543.6 847.8,546.1 853.5,547.9 858.9,550.4 864.7,552.1 870.4,553.8" fill="none" stroke="#b44a4a" stroke-width="0.8" stroke-opacity="0.74"/>
<polyline points="595.0,553.2 601.0,552.6 606.9,553.3 612.8,554.6 618.7,553.9 624.1,551.2 630.1,550.4" fill="none" stroke="#b44a4a" stroke-width="0.7" stroke-opacity="0.70"/>
<polyline points="643.5,547.5 649.4,548.5 655.4,548.4 661.4,547.8 667.3,547.3 673.3,547.4 679.3,548.2" fill="none" stroke="#b44a4a" stroke-width="0.7" stroke-opacity="0.71"/>
<polyline points="731.7,550.2 737.7,550.7 743.3,552.7 748.9,555.0 754.7,556.3 760.7,556.5 766.6,555.2 772.4,553.9 777.8,551.1" fill="none" stroke="#b44a4a" stroke-width="0.8" stroke-opacity="0.66"/>
<polyline points="792.3,550.8 798.3,550.1 804.1,548.6 810.1,548.0 816.0,547.3 821.9,545.8" fill="none" stroke="#b44a4a" stroke-width="0.8" stroke-opacity="0.50"/>
<polyline points="598.9,313.0 596.5,318.5 594.7,324.2 591.2,329.1 587.6,333.9 584.1,338.8" fill="none" stroke="#b44a4a" stroke-width="1.0" stroke-opacity="0.46"/>
<polyline points="594.4,499.1 595.8,505.0 597.2,510.8 599.2,516.5 599.3,522.5 597.8,528.3" fill="none" stroke="#b44a4a" stroke-width="0.8" stroke-opacity="0.53"/>
<polyline points="596.5,538.8 596.9,544.8 596.7,550.8 595.3,556.6 595.8,562.6 595.4,568.6" fill="none" stroke="#b44a4a" stroke-width="0.7" stroke-opacity="0.55"/>
<polyline points="604.4,313.0 603.3,318.9 601.2,324.5 600.9,330.5 600.5,336.5 600.0,342.5 600.0,348.5 601.5,354.3 602.3,360.2" fill="none" stroke="#b44a4a" stroke-width="0.8" stroke-opacity="0.48"/>
<polyline points="607.7,372.9 608.4,378.8 610.4,384.5 613.0,389.9 614.5,395.7 614.2,401.7 613.3,407.6 613.0,413.6 611.3,419.4 608.5,424.7 605.5,429.9" fill="none" stroke="#b44a4a" stroke-width="0.7" stroke-opacity="0.65"/>
<polyline points="608.5,441.2 606.5,446.8 604.6,452.5 602.5,458.1 599.2,463.2 595.6,468.0 592.3,472.9" fill="none" stroke="#b44a4a" stroke-width="0.8" stroke-opacity="0.46"/>
<polyline points="608.7,490.2 605.4,495.2 602.1,500.2 599.1,505.4 597.6,511.2 595.6,516.9 594.8,522.8 595.4,528.8" fill="none" stroke="#b44a4a" stroke-width="1.0" stroke-opacity="0.57"/>
<polyline points="614.1,313.0 614.4,319.0 613.7,325.0 614.4,330.9 616.8,336.4 618.2,342.2 618.6,348.2 617.6,354.1 615.7,359.8 615.4,365.8 614.6,371.8 613.0,377.5" fill="none" stroke="#b44a4a" stroke-width="0.7" stroke-opacity="0.49"/>
<polyline points="614.1,388.4 615.2,394.3 615.0,400.3 616.5,406.1 618.8,411.6 620.2,417.5 622.8,422.8 624.1,428.7 625.4,434.6 628.4,439.8 631.9,444.6 635.1,449.7" fill="none" stroke="#b44a4a" stroke-width="0.7" stroke-opacity="0.67"/>
<polyline points="619.2,461.9 619.0,467.9 619.4,473.9 618.6,479.9 615.9,485.3 612.3,490.0 608.5,494.7 605.5,499.9 604.1,505.7 601.0,510.8" fill="none" stroke="#b44a4a" stroke-width="0.7" stroke-opacity="0.56"/>
<polyline points="614.1,527.9 614.0,533.9 613.5,539.9 611.2,545.5 609.9,551.3 609.1,557.3 608.8,563.3 607.4,569.1 607.1,575.1 607.0,581.1 606.1,587.0" fill="none" stroke="#b44a4a" stroke-width="1.0" stroke-opacity="0.67"/>
<polyline points="625.1,313.0 621.8,318.0 619.9,323.7 616.2,328.4 611.7,332.4 607.3,336.5 602.8,340.5" fill="none" stroke="#b44a4a" stroke-width="0.7" stroke-opacity="0.54"/>
<polyline points="627.7,466.9 629.8,472.5 630.8,478.5 630.6,484.4 630.6,490.4 632.3,496.2 632.7,502.2 632.0,508.1 632.4,514.1 632.4,520.1 630.8,525.9 628.4,531.4" fill="none" stroke="#b44a4a" stroke-width="0.7" stroke-opacity="0.65"/>
<polyline points="638.6,313.0 638.0,319.0 635.8,324.6 634.7,330.5 632.0,335.8 629.2,341.1" fill="none" stroke="#b44a4a" stroke-width="1.0" stroke-opacity="0.54"/>
<polyline points="638.8,359.6 639.3,365.6 641.7,371.1 645.5,375.7 647.6,381.4 648.1,387.3 648.7,393.3" fill="none" stroke="#b44a4a" stroke-width="0.7" stroke-opacity="0.50"/>
<polyline points="642.0,532.9 644.3,538.4 648.1,543.1 651.8,547.8 654.8,553.0 657.9,558.1 659.7,563.9 659.8,569.9 658.4,575.7 656.4,581.4 653.4,586.6 650.4,591.8" fill="none" stroke="#b44a4a" stroke-width="0.7" stroke-opacity="0.55"/>
<polyline points="649.4,313.0 650.0,319.0 652.0,324.6 652.0,330.6 650.1,336.3 649.3,342.2 650.4,348.1" fill="none" stroke="#b44a4a" stroke-width="0.7" stroke-opacity="0.74"/>
<polyline points="649.2,410.6 649.3,416.6 650.9,422.4 651.4,428.3 650.1,434.2 648.1,439.9 646.9,445.7 645.4,451.5 642.8,456.9 641.8,462.9 641.5,468.9" fill="none" stroke="#b44a4a" stroke-width="1.0" stroke-opacity="0.66"/>
<polyline points="650.5,477.1 647.5,482.3 644.6,487.6 640.3,491.8 635.8,495.8 632.4,500.7" fill="none" stroke="#b44a4a" stroke-width="0.7" stroke-opacity="0.58"/>
<polyline points="657.6,386.1 656.8,392.0 656.2,398.0 654.9,403.9 655.2,409.9 656.6,415.7 659.8,420.8 662.1,426.3 664.3,431.9 667.7,436.8 669.8,442.5 672.8,447.7" fill="none" stroke="#b44a4a" stroke-width="0.7" stroke-opacity="0.64"/>
<polyline points="655.3,458.9 656.1,464.9 655.2,470.8 656.0,476.8 654.7,482.6 655.3,488.6" fill="none" stroke="#b44a4a" stroke-width="0.8" stroke-opacity="0.55"/>
<polyline points="655.0,504.4 652.2,509.7 649.6,515.1 648.1,520.9 647.5,526.9 648.1,532.8 649.2,538.8 650.6,544.6 653.2,550.0 654.4,555.9" fill="none" stroke="#b44a4a" stroke-width="0.8" stroke-opacity="0.70"/>
<polyline points="668.6,470.4 671.1,475.9 672.6,481.7 673.2,487.7 675.1,493.4 678.6,498.3 682.9,502.4" fill="none" stroke="#b44a4a" stroke-width="0.8" stroke-opacity="0.52"/>
<polyline points="669.4,520.8 670.2,526.7 671.8,532.5 674.8,537.7 677.1,543.3 679.3,548.8 680.1,554.8 679.2,560.7" fill="none" stroke="#b44a4a" stroke-width="0.7" stroke-opacity="0.49"/>
<polyline points="677.9,313.0 678.0,319.0 678.1,325.0 676.7,330.8 676.2,336.8 677.1,342.7 676.5,348.7" fill="none" stroke="#b44a4a" stroke-width="1.0" stroke-opacity="0.71"/>
<polyline points="676.8,359.2 673.5,364.1 671.8,369.9 670.7,375.8 670.7,381.8 669.2,387.6" fill="none" stroke="#b44a4a" stroke-width="1.0" stroke-opacity="0.71"/>
<polyline points="678.0,473.9 677.8,479.9 677.4,485.9 679.1,491.7 678.8,497.6 679.7,503.6 681.9,509.2 685.2,514.2 688.6,519.1 690.7,524.7 694.1,529.7" fill="none" stroke="#b44a4a" stroke-width="0.7" stroke-opacity="0.74"/>
<polyline points="679.1,540.8 680.3,546.6 681.8,552.5 683.8,558.1 687.3,563.0 690.8,567.9 694.3,572.7 697.8,577.6 701.0,582.7 703.2,588.3" fill="none" stroke="#b44a4a" stroke-width="0.7" stroke-opacity="0.70"/>
<polyline points="690.0,351.6 689.8,357.6 687.8,363.3 686.3,369.1 685.1,374.9 682.8,380.5" fill="none" stroke="#b44a4a" stroke-width="1.0" stroke-opacity="0.62"/>
<polyline points="690.7,449.2 688.5,454.7 687.0,460.6 685.9,466.5 684.6,472.3 684.0,478.3 684.8,484.2" fill="none" stroke="#b44a4a" stroke-width="0.8" stroke-opacity="0.66"/>
<polyline points="687.5,550.5 689.4,556.1 692.7,561.1 694.3,566.9 694.6,572.9" fill="none" stroke="#b44a4a" stroke-width="0.7" stroke-opacity="0.47"/>
<polyline points="701.3,379.8 700.4,385.7 698.1,391.3 697.8,397.2 699.2,403.1 702.0,408.4 705.0,413.6 708.0,418.8 711.0,424.0 714.1,429.1 717.1,434.3" fill="none" stroke="#b44a4a" stroke-width="1.0" stroke-opacity="0.64"/>
<polyline points="695.2,488.6 698.0,493.9 701.5,498.8 705.3,503.4 709.7,507.5 714.2,511.5 718.6,515.6 722.8,519.8 726.0,524.9 728.8,530.2 731.3,535.7" fill="none" stroke="#b44a4a" stroke-width="1.0" stroke-opacity="0.61"/>
<polyline points="704.2,354.0 706.1,359.7 707.8,365.4 707.6,371.4 707.7,377.4 706.1,383.2 706.0,389.2 703.9,394.8 702.6,400.7" fill="none" stroke="#b44a4a" stroke-width="0.8" stroke-opacity="0.70"/>
<polyline points="711.0,448.9 713.0,454.6 715.4,460.0 718.1,465.4 719.9,471.1" fill="none" stroke="#b44a4a" stroke-width="1.0" stroke-opacity="0.47"/>
<polyline points="705.6,524.3 706.2,530.3 705.3,536.2 706.1,542.2 705.4,548.1 703.0,553.6" fill="none" stroke="#b44a4a" stroke-width="0.8" stroke-opacity="0.49"/>
<polyline points="720.1,359.6 719.8,365.6 717.6,371.2 715.2,376.6 713.0,382.2 709.8,387.3 706.2,392.1 702.5,396.8 699.3,401.9 696.2,407.1" fill="none" stroke="#b44a4a" stroke-width="0.7" stroke-opacity="0.45"/>
<polyline points="718.8,423.1 720.3,428.9 720.8,434.9 719.3,440.7 718.2,446.6 718.0,452.6 717.6,458.6 716.0,464.4 714.7,470.2 713.8,476.1" fill="none" stroke="#b44a4a" stroke-width="0.8" stroke-opacity="0.61"/>
<polyline points="721.7,484.1 723.0,490.0 722.7,495.9 724.4,501.7 727.8,506.7 730.9,511.8 734.1,516.8 735.7,522.6 736.1,528.6 736.3,534.6 734.5,540.3" fill="none" stroke="#b44a4a" stroke-width="1.0" stroke-opacity="0.70"/>
<polyline points="724.1,367.1 726.7,372.5 729.6,377.8 732.6,383.0 734.9,388.5 735.6,394.5 737.6,400.1" fill="none" stroke="#b44a4a" stroke-width="0.8" stroke-opacity="0.59"/>
<polyline points="728.7,411.0 727.0,416.8 727.0,422.8 727.5,428.8 728.7,434.7 731.5,440.0 734.3,445.3 737.1,450.6" fill="none" stroke="#b44a4a" stroke-width="1.0" stroke-opacity="0.72"/>
<polyline points="727.4,464.8 729.4,470.5 731.5,476.1 733.5,481.8 736.7,486.8 740.9,491.1 744.7,495.7" fill="none" stroke="#b44a4a" stroke-width="1.0" stroke-opacity="0.72"/>
<polyline points="739.5,313.0 742.1,318.4 743.2,324.3 744.0,330.3 744.1,336.3" fill="none" stroke="#b44a4a" stroke-width="0.7" stroke-opacity="0.54"/>
<polyline points="741.2,342.9 742.6,348.7 745.2,354.1 747.4,359.6 750.8,364.6 754.1,369.7 757.3,374.7 760.7,379.7" fill="none" stroke="#b44a4a" stroke-width="0.8" stroke-opacity="0.71"/>
<polyline points="740.5,391.4 743.9,396.3 746.3,401.8 749.4,407.0 751.6,412.5 754.4,417.8 758.4,422.3 763.0,426.2 767.5,430.1 770.8,435.2 773.8,440.4 777.3,445.2" fill="none" stroke="#b44a4a" stroke-width="0.8" stroke-opacity="0.63"/>
<polyline points="741.7,465.8 741.4,471.8 742.2,477.7 744.7,483.2 745.6,489.1 745.0,495.1 745.2,501.1 743.7,506.9" fill="none" stroke="#b44a4a" stroke-width="0.8" stroke-opacity="0.62"/>
<polyline points="747.2,363.9 748.4,369.8 748.1,375.8 749.5,381.6 752.3,387.0 755.0,392.3 757.7,397.7 758.9,403.5" fill="none" stroke="#b44a4a" stroke-width="0.7" stroke-opacity="0.57"/>
<polyline points="749.2,412.4 747.9,418.3 745.0,423.5 741.8,428.6 739.1,434.0 736.5,439.4 734.5,445.0" fill="none" stroke="#b44a4a" stroke-width="0.8" stroke-opacity="0.55"/>
<polyline points="745.0,460.3 745.9,466.2 745.6,472.2 745.1,478.2 744.7,484.2 743.1,490.0 742.6,495.9" fill="none" stroke="#b44a4a" stroke-width="0.7" stroke-opacity="0.52"/>
<polyline points="745.7,503.4 744.0,509.1 743.5,515.1 743.2,521.1 744.5,527.0 744.9,533.0" fill="none" stroke="#b44a4a" stroke-width="1.0" stroke-opacity="0.74"/>
<polyline points="760.8,352.3 758.9,358.0 758.9,364.0 758.0,369.9 758.6,375.9 761.1,381.3 762.9,387.0 763.8,393.0 763.6,399.0 764.4,404.9 766.6,410.5" fill="none" stroke="#b44a4a" stroke-width="1.0" stroke-opacity="0.48"/>
<polyline points="755.8,470.0 756.2,476.0 757.6,481.9 759.3,487.6 759.4,493.6 758.2,499.5 756.0,505.1 753.8,510.7 753.1,516.6 753.4,522.6" fill="none" stroke="#b44a4a" stroke-width="1.0" stroke-opacity="0.54"/>
<polyline points="764.8,367.1 766.5,372.8 767.7,378.7 770.1,384.2 771.8,390.0 773.8,395.6 775.4,401.4" fill="none" stroke="#b44a4a" stroke-width="0.8" stroke-opacity="0.72"/>
<polyline points="766.5,409.7 767.3,415.6 766.8,421.6 765.9,427.5 764.1,433.3 763.4,439.2 762.9,445.2 761.7,451.1 761.0,457.1 762.5,462.9" fill="none" stroke="#b44a4a" stroke-width="1.0" stroke-opacity="0.46"/>
<polyline points="768.7,481.3 766.1,486.7 762.8,491.7 761.3,497.5 760.6,503.5 758.7,509.2 757.4,515.0 754.5,520.3 752.0,525.7 748.5,530.6" fill="none" stroke="#b44a4a" stroke-width="0.7" stroke-opacity="0.71"/>
<polyline points="781.6,313.0 780.1,318.8 777.8,324.4 774.6,329.5 771.5,334.6 768.3,339.7 765.3,344.9 764.1,350.7 762.0,356.4" fill="none" stroke="#b44a4a" stroke-width="1.0" stroke-opacity="0.48"/>
<polyline points="778.5,422.1 781.0,427.5 782.4,433.4 784.8,438.8 788.1,443.8 789.7,449.6 792.5,454.9 795.9,459.9 800.2,464.1 804.1,468.6" fill="none" stroke="#b44a4a" stroke-width="1.0" stroke-opacity="0.70"/>
<polyline points="775.9,483.4 776.1,489.4 774.5,495.2 773.4,501.1 773.3,507.1 771.5,512.8 771.2,518.8 770.6,524.8 770.8,530.8 769.6,536.7" fill="none" stroke="#b44a4a" stroke-width="0.8" stroke-opacity="0.52"/>
<polyline points="781.8,547.5 781.0,553.5 781.4,559.4 781.0,565.4 782.7,571.2 784.3,577.0 786.7,582.5 787.4,588.5 788.9,594.3 791.2,599.8" fill="none" stroke="#b44a4a" stroke-width="1.0" stroke-opacity="0.50"/>
<polyline points="786.9,313.0 789.8,318.3 794.1,322.5 796.7,327.8 798.4,333.6 801.6,338.7 804.0,344.1 804.5,350.1 804.8,356.1 806.6,361.8 808.5,367.5 810.6,373.1" fill="none" stroke="#b44a4a" stroke-width="0.8" stroke-opacity="0.59"/>
<polyline points="789.0,384.2 786.9,389.8 785.7,395.7 785.6,401.7 787.0,407.5 789.0,413.2 789.9,419.1 789.3,425.1 789.7,431.1" fill="none" stroke="#b44a4a" stroke-width="0.7" stroke-opacity="0.64"/>
<polyline points="786.8,549.1 789.3,554.5 790.0,560.5 789.3,566.5 789.7,572.4 791.8,578.0 795.4,582.8 797.9,588.3 798.8,594.2 797.5,600.1" fill="none" stroke="#b44a4a" stroke-width="0.7" stroke-opacity="0.64"/>
<polyline points="795.3,313.0 795.6,319.0 797.7,324.6 799.1,330.5 801.8,335.8" fill="none" stroke="#b44a4a" stroke-width="0.8" stroke-opacity="0.60"/>
<polyline points="797.8,346.9 799.4,352.7 802.7,357.7 805.6,363.0 807.2,368.7 808.8,374.5 811.8,379.7 816.0,384.1 820.1,388.4 823.6,393.2 825.7,398.9 829.3,403.6" fill="none" stroke="#b44a4a" stroke-width="0.7" stroke-opacity="0.71"/>
<polyline points="796.4,415.7 796.3,421.7 796.9,427.7 798.7,433.4 802.1,438.3 805.6,443.2 809.2,448.0 811.0,453.7 811.1,459.7 809.7,465.6 806.5,470.6 803.3,475.7" fill="none" stroke="#b44a4a" stroke-width="1.0" stroke-opacity="0.50"/>
<polyline points="799.3,493.0 799.4,499.0 800.0,505.0 800.0,511.0 801.5,516.8 801.5,522.8 801.3,528.8 800.6,534.7 798.5,540.4 797.5,546.3 795.5,551.9" fill="none" stroke="#b44a4a" stroke-width="1.0" stroke-opacity="0.55"/>
<polyline points="807.2,352.9 809.8,358.3 810.9,364.2 811.8,370.2 814.2,375.6 815.2,381.6 817.2,387.2 820.7,392.1 824.1,397.0 828.3,401.3 832.5,405.6 836.6,410.0" fill="none" stroke="#b44a4a" stroke-width="0.7" stroke-opacity="0.62"/>
<polyline points="808.5,423.8 806.6,429.4 803.4,434.6 801.7,440.3 800.0,446.1 798.2,451.8 795.2,457.0 790.8,461.1 786.5,465.2" fill="none" stroke="#b44a4a" stroke-width="1.0" stroke-opacity="0.72"/>
<polyline points="805.4,489.0 803.5,494.6 800.5,499.9 799.0,505.7 796.4,511.1 795.5,517.0 795.8,523.0 796.6,529.0 798.5,534.6" fill="none" stroke="#b44a4a" stroke-width="1.0" stroke-opacity="0.57"/>
<polyline points="811.3,546.0 810.7,552.0 811.4,558.0 813.6,563.5 815.0,569.4 816.9,575.1" fill="none" stroke="#b44a4a" stroke-width="1.0" stroke-opacity="0.49"/>
<polyline points="819.9,386.9 817.4,392.4 816.8,398.3 815.7,404.2 816.4,410.2" fill="none" stroke="#b44a4a" stroke-width="0.7" stroke-opacity="0.56"/>
<polyline points="816.8,420.7 818.1,426.5 817.4,432.5 816.9,438.5 815.2,444.2 813.6,450.0 813.7,456.0 814.9,461.9 817.4,467.3 818.2,473.3 817.4,479.2" fill="none" stroke="#b44a4a" stroke-width="1.0" stroke-opacity="0.52"/>
<polyline points="827.9,386.9 828.1,392.9 830.2,398.6 831.7,404.4 832.6,410.3 833.2,416.3 832.2,422.2 830.4,427.9" fill="none" stroke="#b44a4a" stroke-width="0.7" stroke-opacity="0.60"/>
<polyline points="826.9,442.3 827.6,448.2 829.8,453.8 831.5,459.6 834.3,464.9 835.8,470.7 836.5,476.6 837.8,482.5" fill="none" stroke="#b44a4a" stroke-width="1.0" stroke-opacity="0.61"/>
<polyline points="826.7,494.5 828.5,500.2 828.4,506.2 830.1,511.9 833.2,517.1 835.7,522.6 839.0,527.6 843.0,532.0 847.1,536.4 851.7,540.2 856.2,544.2 860.6,548.3" fill="none" stroke="#b44a4a" stroke-width="0.8" stroke-opacity="0.62"/>
<polyline points="834.8,313.0 836.1,318.8 837.2,324.7 839.9,330.1 841.4,335.9 841.8,341.9 843.2,347.7 843.3,353.7 845.0,359.5 848.3,364.5 849.8,370.3 851.9,375.9" fill="none" stroke="#b44a4a" stroke-width="1.0" stroke-opacity="0.72"/>
<polyline points="836.7,388.1 835.2,393.9 832.3,399.1 828.4,403.7 824.5,408.2 820.5,412.7 816.5,417.2 812.6,421.7 809.8,427.1 808.2,432.9 805.1,438.0" fill="none" stroke="#b44a4a" stroke-width="1.0" stroke-opacity="0.66"/>
<polyline points="838.7,461.6 839.1,467.5 840.4,473.4 841.5,479.3 842.0,485.3 840.5,491.1 840.7,497.1 842.3,502.9" fill="none" stroke="#b44a4a" stroke-width="0.8" stroke-opacity="0.73"/>
<polyline points="836.9,518.6 836.2,524.6 834.0,530.2 833.6,536.2 833.2,542.2 831.2,547.8 830.1,553.7 830.1,559.7 832.0,565.4" fill="none" stroke="#b44a4a" stroke-width="0.8" stroke-opacity="0.75"/>
<polyline points="848.0,353.3 850.5,358.8 854.5,363.3 858.9,367.3 863.4,371.3 867.9,375.3 871.4,380.2 874.6,385.2" fill="none" stroke="#b44a4a" stroke-width="1.0" stroke-opacity="0.53"/>
<polyline points="849.1,407.1 848.8,413.1 849.2,419.1 848.6,425.0 847.3,430.9" fill="none" stroke="#b44a4a" stroke-width="1.0" stroke-opacity="0.71"/>
<polyline points="850.4,438.4 851.4,444.3 851.2,450.3 849.2,456.0 847.5,461.7 845.4,467.3 843.3,473.0 843.2,479.0 843.9,484.9 843.9,490.9" fill="none" stroke="#b44a4a" stroke-width="0.7" stroke-opacity="0.71"/>
<polyline points="860.1,313.0 860.3,319.0 860.8,325.0 861.1,331.0 861.0,337.0 860.8,343.0" fill="none" stroke="#b44a4a" stroke-width="0.7" stroke-opacity="0.49"/>
<polyline points="860.5,354.9 862.5,360.6 863.9,366.4 864.7,372.3 865.3,378.3 865.0,384.3 864.5,390.3 864.5,396.3 864.5,402.3" fill="none" stroke="#b44a4a" stroke-width="1.0" stroke-opacity="0.64"/>
<polyline points="859.0,512.6 860.2,518.5 862.5,524.0 863.8,529.9 866.0,535.5 867.8,541.2 868.6,547.2 867.7,553.1 865.5,558.7" fill="none" stroke="#b44a4a" stroke-width="0.7" stroke-opacity="0.73"/>
<polyline points="871.3,378.3 870.3,384.2 870.6,390.2 869.6,396.2 870.6,402.1 870.9,408.1 873.0,413.7 873.9,419.6 873.0,425.6 871.4,431.3" fill="none" stroke="#b44a4a" stroke-width="0.8" stroke-opacity="0.51"/>
<polyline points="869.0,440.5 871.0,446.2 873.9,451.4 877.1,456.5 881.1,461.0 885.3,465.3" fill="none" stroke="#b44a4a" stroke-width="0.8" stroke-opacity="0.73"/>
<polyline points="868.6,487.2 868.3,493.2 866.5,498.9 865.6,504.8 863.7,510.5 861.4,516.1 860.0,521.9 859.2,527.8 858.5,533.8" fill="none" stroke="#b44a4a" stroke-width="0.8" stroke-opacity="0.51"/>
<polyline points="726.2,349.1 732.1,360.8 733.5,379.8 730.6,390.1 736.4,401.7 742.3,416.4 739.4,428.0 740.8,440.0" fill="none" stroke="#f5804e" stroke-width="1.6" stroke-opacity="0.85" stroke-linejoin="round"/>
<polyline points="694.1,350.6 701.4,368.1 708.7,384.2 716.0,398.8 721.8,416.4 726.2,440.0" fill="none" stroke="#f5804e" stroke-width="1.6" stroke-opacity="0.85" stroke-linejoin="round"/>
<polyline points="765.7,375.4 759.8,395.9 748.1,404.7 739.4,419.3" fill="none" stroke="#f5804e" stroke-width="1.6" stroke-opacity="0.85" stroke-linejoin="round"/>
<polyline points="699.9,410.5 721.8,398.8 743.8,398.8 754.0,410.5 752.5,428.0 748.1,440.0" fill="none" stroke="#f5804e" stroke-width="1.6" stroke-opacity="0.85" stroke-linejoin="round"/>
<polyline points="678.0,429.5 711.6,425.1 739.4,425.1 765.7,425.1 806.0,429.5" fill="none" stroke="#f5804e" stroke-width="1.6" stroke-opacity="0.85" stroke-linejoin="round"/>
<polyline points="748.1,416.4 780.3,410.5 806.0,401.7" fill="none" stroke="#f5804e" stroke-width="1.6" stroke-opacity="0.85" stroke-linejoin="round"/>
<polyline points="774.4,372.5 789.0,357.9" fill="none" stroke="#f5804e" stroke-width="1.4" stroke-opacity="0.85" stroke-linejoin="round"/>
<polyline points="742.3,343.3 756.9,360.8 777.4,387.1 786.1,404.7 792.0,440.0" fill="none" stroke="#b84848" stroke-width="1.3" stroke-opacity="0.85" stroke-linejoin="round"/>
<polyline points="771.5,346.2 756.9,363.8 740.8,385.7 729.1,395.9" fill="none" stroke="#b84848" stroke-width="1.3" stroke-opacity="0.85" stroke-linejoin="round"/>
<polyline points="751.1,357.9 745.2,376.9 742.3,393.0" fill="none" stroke="#e8505a" stroke-width="1.3" stroke-opacity="0.85" stroke-linejoin="round"/>
<polyline points="678.0,365.2 689.7,381.3 694.1,394.4 686.8,412.0 680.9,428.0 678.0,440.0" fill="none" stroke="#e8505a" stroke-width="1.5" stroke-opacity="0.85" stroke-linejoin="round"/>
<polyline points="678.0,412.0 707.2,407.6 733.5,401.7 754.0,407.6 768.6,431.0 773.0,440.0" fill="none" stroke="#b84848" stroke-width="1.3" stroke-opacity="0.85" stroke-linejoin="round"/>
<polyline points="739.4,341.8 765.7,349.1 780.3,353.5" fill="none" stroke="#e8505a" stroke-width="1.2" stroke-opacity="0.85" stroke-linejoin="round"/>
<polyline points="678.0,338.9 695.5,363.8 707.2,390.1 726.2,395.9" fill="none" stroke="#b84848" stroke-width="1.1" stroke-opacity="0.85" stroke-linejoin="round"/>
<polyline points="678.0,382.8 721.8,384.2 739.4,385.7" fill="none" stroke="#b84848" stroke-width="1.1" stroke-opacity="0.85" stroke-linejoin="round"/>
<polyline points="678.0,398.8 707.2,395.9 721.8,393.0" fill="none" stroke="#c86060" stroke-width="0.9" stroke-opacity="0.85" stroke-linejoin="round"/>
<polyline points="765.7,393.0 806.0,390.1" fill="none" stroke="#c86060" stroke-width="0.9" stroke-opacity="0.85" stroke-linejoin="round"/>
<polyline points="759.8,375.4 806.0,379.8" fill="none" stroke="#c86060" stroke-width="0.9" stroke-opacity="0.85" stroke-linejoin="round"/>
<polyline points="707.2,360.8 751.1,372.5 768.6,369.6" fill="none" stroke="#c86060" stroke-width="0.9" stroke-opacity="0.85" stroke-linejoin="round"/>
<polyline points="692.6,433.9 707.2,419.3 716.0,404.7" fill="none" stroke="#c86060" stroke-width="0.9" stroke-opacity="0.85" stroke-linejoin="round"/>
<polyline points="771.5,410.5 780.3,440.0" fill="none" stroke="#c86060" stroke-width="0.9" stroke-opacity="0.85" stroke-linejoin="round"/>
<polyline points="614.1,407.8 654.2,414.2 686.4,417.4 718.5,415.8 740.0,417.4" fill="none" stroke="#b84848" stroke-width="1.3" stroke-opacity="0.85" stroke-linejoin="round"/>
<polyline points="614.1,417.4 654.2,423.8 702.4,425.4 740.0,424.6" fill="none" stroke="#f5804e" stroke-width="1.5" stroke-opacity="0.85" stroke-linejoin="round"/>
<polyline points="667.1,353.2 679.9,369.2 692.8,391.7 686.4,409.4 681.5,429.9" fill="none" stroke="#e8505a" stroke-width="1.4" stroke-opacity="0.85" stroke-linejoin="round"/>
<polyline points="630.1,388.5 662.3,394.9 702.4,388.5 734.5,394.9" fill="none" stroke="#c86060" stroke-width="0.9" stroke-opacity="0.85" stroke-linejoin="round"/>
<polyline points="638.2,372.4 670.3,378.9 702.4,366.0" fill="none" stroke="#c86060" stroke-width="0.9" stroke-opacity="0.85" stroke-linejoin="round"/>
<polyline points="694.4,353.2 702.4,372.4 718.5,382.1 740.0,377.3" fill="none" stroke="#c86060" stroke-width="0.9" stroke-opacity="0.85" stroke-linejoin="round"/>
<polyline points="626.9,505.1 657.4,468.2 679.9,439.3 696.0,429.6" fill="none" stroke="#b84848" stroke-width="1.4" stroke-opacity="0.85" stroke-linejoin="round"/>
<polyline points="609.3,495.5 654.2,484.2 694.4,468.2 718.5,456.9" fill="none" stroke="#f5804e" stroke-width="1.5" stroke-opacity="0.85" stroke-linejoin="round"/>
<polyline points="692.8,500.3 712.0,473.0 721.7,440.9 721.7,420.0" fill="none" stroke="#b84848" stroke-width="1.2" stroke-opacity="0.85" stroke-linejoin="round"/>
<polyline points="638.2,439.3 670.3,458.5 679.9,484.2 670.3,500.3" fill="none" stroke="#c86060" stroke-width="0.9" stroke-opacity="0.85" stroke-linejoin="round"/>
<polyline points="721.7,500.3 728.1,476.2 724.9,436.1 726.5,420.0" fill="none" stroke="#f5804e" stroke-width="1.4" stroke-opacity="0.85" stroke-linejoin="round"/>
<polyline points="654.2,423.2 686.4,445.7 702.4,455.3 734.5,458.5" fill="none" stroke="#c86060" stroke-width="0.9" stroke-opacity="0.85" stroke-linejoin="round"/>
<polyline points="686.4,432.8 702.4,452.1 734.5,458.5" fill="none" stroke="#e8505a" stroke-width="1.2" stroke-opacity="0.85" stroke-linejoin="round"/>
<polyline points="756.1,432.8 796.2,460.1 812.3,465.0 862.0,471.4" fill="none" stroke="#b84848" stroke-width="1.3" stroke-opacity="0.85" stroke-linejoin="round"/>
<polyline points="756.1,439.3 780.1,468.2 804.2,495.5 829.9,521.2" fill="none" stroke="#b84848" stroke-width="1.3" stroke-opacity="0.85" stroke-linejoin="round"/>
<polyline points="740.0,461.8 756.1,468.2 772.1,481.0 783.4,489.1 783.4,505.1" fill="none" stroke="#e8505a" stroke-width="1.3" stroke-opacity="0.85" stroke-linejoin="round"/>
<polyline points="740.0,429.6 780.1,429.6 820.3,432.8" fill="none" stroke="#f5804e" stroke-width="1.4" stroke-opacity="0.85" stroke-linejoin="round"/>
<polyline points="780.1,420.0 793.0,452.1 799.4,484.2 796.2,509.9" fill="none" stroke="#c86060" stroke-width="0.9" stroke-opacity="0.85" stroke-linejoin="round"/>
<polyline points="740.0,452.1 772.1,445.7 793.0,439.3 825.1,444.1" fill="none" stroke="#c86060" stroke-width="0.9" stroke-opacity="0.85" stroke-linejoin="round"/>
<polyline points="730.0,394.9 770.1,345.1 778.2,337.1" fill="none" stroke="#b84848" stroke-width="1.3" stroke-opacity="0.85" stroke-linejoin="round"/>
<polyline points="730.0,335.5 754.1,343.5 776.6,353.2" fill="none" stroke="#e8505a" stroke-width="1.3" stroke-opacity="0.85" stroke-linejoin="round"/>
<polyline points="730.0,417.4 762.1,401.4 794.2,394.9 813.5,391.7" fill="none" stroke="#f5804e" stroke-width="1.4" stroke-opacity="0.85" stroke-linejoin="round"/>
<polyline points="730.0,372.4 762.1,369.2 794.2,377.3" fill="none" stroke="#c86060" stroke-width="0.9" stroke-opacity="0.85" stroke-linejoin="round"/>
<polyline points="746.1,429.9 754.1,385.3 762.1,369.2" fill="none" stroke="#c86060" stroke-width="0.9" stroke-opacity="0.85" stroke-linejoin="round"/>
<polyline points="730.0,407.8 754.1,372.4 762.1,353.2 770.1,345.1" fill="none" stroke="#f5804e" stroke-width="1.4" stroke-opacity="0.85" stroke-linejoin="round"/>
<polyline points="615.2,417.9 657.0,429.3 714.0,426.5 760.0,419.8" fill="none" stroke="#fb8a55" stroke-width="2.0" stroke-opacity="0.85" stroke-linejoin="round"/>
<polyline points="695.0,347.6 706.4,366.6 714.0,395.1 721.6,404.6 744.4,412.2 760.0,404.6" fill="none" stroke="#fb8a55" stroke-width="2.0" stroke-opacity="0.85" stroke-linejoin="round"/>
<polyline points="729.2,351.4 733.0,378.0 731.1,397.0" fill="none" stroke="#fb8a55" stroke-width="1.8" stroke-opacity="0.85" stroke-linejoin="round"/>
<polyline points="706.4,402.7 721.6,397.0 740.6,398.9 752.0,408.4 760.0,419.8 752.0,438.8 733.0,446.4 714.0,442.6 706.4,427.4 706.4,402.7" fill="none" stroke="#fb8a55" stroke-width="1.8" stroke-opacity="0.85" stroke-linejoin="round"/>
<polyline points="630.4,490.1 666.5,476.8 698.8,463.5 710.2,446.4 714.0,431.2" fill="none" stroke="#fb8a55" stroke-width="2.0" stroke-opacity="0.85" stroke-linejoin="round"/>
<polyline points="714.0,442.6 723.5,463.5 721.6,500.0" fill="none" stroke="#fb8a55" stroke-width="1.8" stroke-opacity="0.85" stroke-linejoin="round"/>
<polyline points="672.2,347.6 695.0,393.2 679.8,423.6 679.8,442.6 691.2,446.4 714.0,454.0 744.4,457.8 760.0,465.4" fill="none" stroke="#e84a55" stroke-width="1.8" stroke-opacity="0.85" stroke-linejoin="round"/>
<polyline points="634.2,500.0 679.8,435.0 698.8,431.2" fill="none" stroke="#a83c3c" stroke-width="1.6" stroke-opacity="0.85" stroke-linejoin="round"/>
<polyline points="615.2,408.4 657.0,412.2 695.0,412.2 723.5,400.8" fill="none" stroke="#a83c3c" stroke-width="1.4" stroke-opacity="0.85" stroke-linejoin="round"/>
</g>
<path d="M611.7 420.0 L613.3 414.2 L615.7 401.4 L618.9 398.1 L624.5 398.1 L625.3 390.1 L628.5 380.5 L626.1 378.1 L618.1 378.1 L618.1 374.9 L629.3 368.4 L638.2 370.0 L646.2 373.3 L654.2 374.1 L654.2 370.0 L649.4 366.0 L648.6 361.2 L653.4 354.8 L657.4 347.6 L663.9 346.0 L673.5 344.3 L674.3 338.7 L682.3 338.7 L683.1 325.9 L692.8 325.9 L692.0 331.5 L690.4 337.1 L691.2 347.6 L702.4 350.0 L718.5 348.4 L725.7 341.1 L729.7 333.9 L737.7 336.3 L742.0 341.1 L746.1 337.9 L750.9 332.3 L759.7 330.7 L762.9 327.5 L760.5 324.3 L754.1 322.7 L756.5 319.5 L761.3 318.6 L763.7 313.8 L768.5 317.0 L767.7 322.7 L769.3 328.3 L776.6 332.3 L781.4 334.7 L781.4 343.5 L775.8 348.4 L774.2 356.4 L772.6 364.4 L776.6 370.8 L784.6 372.4 L794.2 376.5 L800.7 381.3 L807.9 386.1 L810.3 394.9 L811.9 401.4 L819.9 404.6 L831.2 407.0 L828.0 414.2 L840.8 416.6 L837.6 422.2 L831.5 426.4 L827.5 437.7 L823.5 448.1 L821.9 457.7 L825.1 459.3 L827.5 454.5 L834.7 451.3 L842.8 453.7 L852.4 458.5 L858.8 461.8 L859.6 467.4 L865.3 464.2 L870.1 469.8 L880.5 473.0 L882.9 479.4 L875.7 480.2 L873.3 484.2 L871.7 490.7 L874.9 500.3 L868.5 506.7 L855.6 513.1 L852.4 516.4 L857.2 519.6 L857.2 525.2 L846.8 526.8 L842.0 530.8 L838.0 538.8 L836.4 546.9 L832.3 545.3 L831.5 535.6 L834.7 529.2 L833.1 521.2 L825.1 518.8 L818.7 520.4 L816.3 513.9 L813.1 509.1 L805.8 509.9 L796.2 513.1 L789.0 511.5 L788.2 506.7 L783.4 505.1 L772.1 505.9 L764.9 507.5 L762.5 501.9 L760.1 492.3 L756.1 490.7 L748.0 494.7 L738.5 498.7 L739.3 506.7 L740.0 521.2 L731.3 521.2 L726.5 514.7 L718.5 509.9 L712.0 502.7 L707.2 497.9 L699.2 500.3 L692.8 505.1 L688.0 495.5 L682.3 496.3 L678.3 501.9 L668.7 501.1 L665.5 492.3 L657.4 490.7 L649.4 493.9 L638.2 498.7 L630.1 503.5 L636.0 505.0 L636.0 510.0 L628.5 510.0 L621.3 507.0 L618.1 514.7 L615.7 511.5 L609.3 498.7 L601.2 497.1 L599.6 492.3 L609.3 484.2 L614.9 478.6 L610.9 469.8 L609.3 461.8 L610.9 453.7 L615.7 448.9 L625.3 439.3 L634.2 429.6 L626.9 425.6 L612.5 424.0 Z" fill="none" stroke="#ff0000" stroke-width="5.1" stroke-linejoin="round"/>
<text x="714.7" y="433.7" font-family="Liberation Sans, sans-serif" font-size="13" textLength="33" lengthAdjust="spacingAndGlyphs" fill="#7a2626">Berlin</text>
<rect x="550" y="792" width="384" height="19" fill="#ffffff" fill-opacity="0.72"/>
<text x="554.6" y="806.6" font-family="Liberation Sans, sans-serif" font-size="11.8" textLength="279" lengthAdjust="spacingAndGlyphs" fill="#2e2e2e">Map data © OpenStreetMap contributors, Microsof…</text>
<text x="847.6" y="806.6" font-family="Liberation Sans, sans-serif" font-size="11.8" textLength="82.4" lengthAdjust="spacingAndGlyphs" fill="#2e2e2e">Powered by Esri</text>
</svg>
</body></html>
